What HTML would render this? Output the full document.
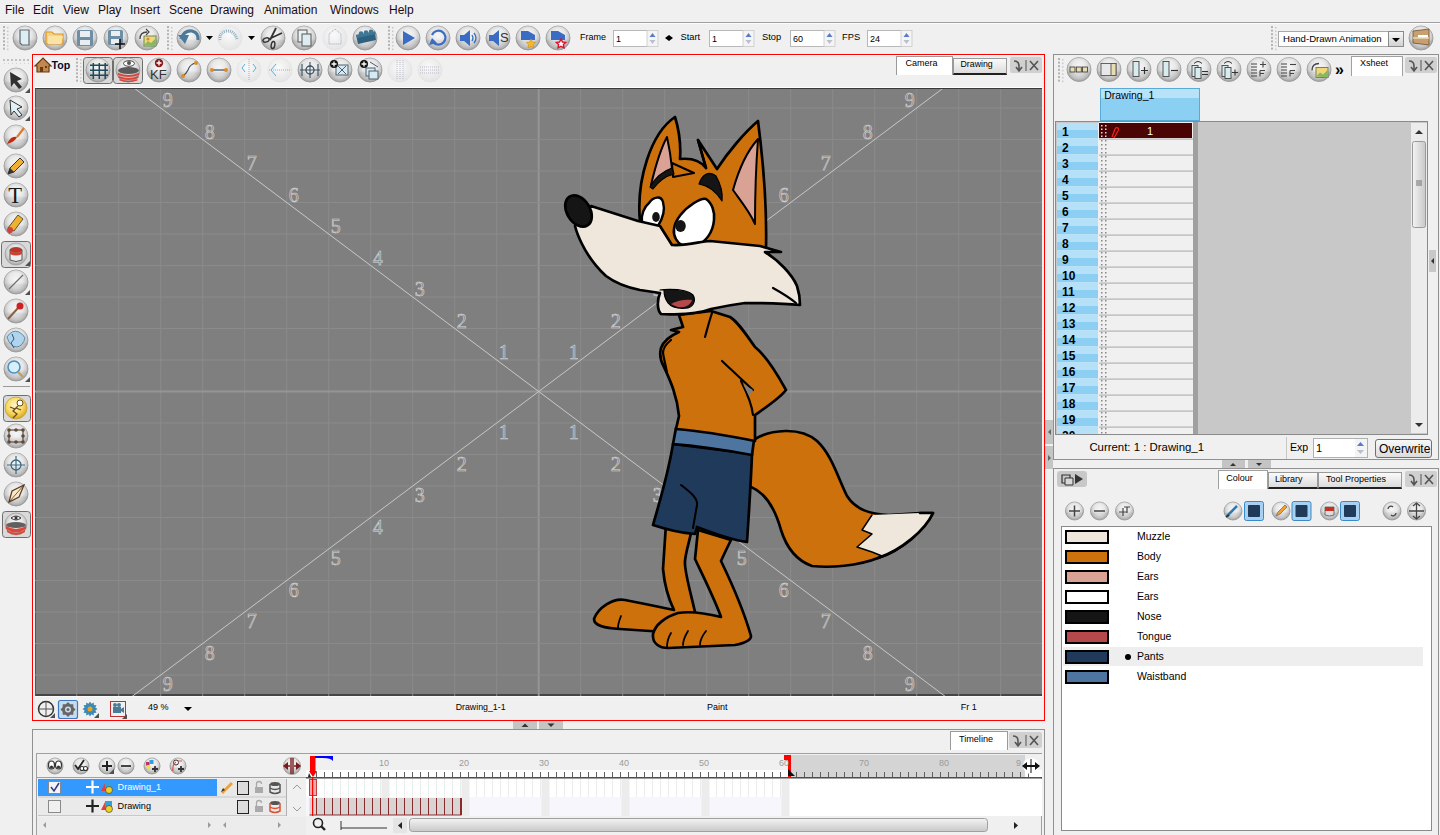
<!DOCTYPE html><html><head><meta charset="utf-8"><style>
*{box-sizing:border-box;margin:0;padding:0}
html,body{width:1440px;height:835px;overflow:hidden;background:#f0f0f0;font-family:"Liberation Sans",sans-serif;color:#000}
.a{position:absolute}
.mi{position:absolute;top:3px;font-size:12px;color:#1a0a14;line-height:normal}
.num{font-family:"Liberation Serif",serif;font-size:20px;line-height:14px;color:#888;-webkit-text-stroke:0.55px #d8d8d8}
svg{position:absolute;left:0;top:0}
</style></head><body><div class="mi" style="left:5px">File</div><div class="mi" style="left:33px">Edit</div><div class="mi" style="left:63px">View</div><div class="mi" style="left:98px">Play</div><div class="mi" style="left:130px">Insert</div><div class="mi" style="left:169px">Scene</div><div class="mi" style="left:210px">Drawing</div><div class="mi" style="left:264px">Animation</div><div class="mi" style="left:330px">Windows</div><div class="mi" style="left:389px">Help</div><div class="a" style="left:0;top:22px;width:1440px;height:1px;background:#a0a0a0"></div><div class="a" style="left:0;top:23px;width:1440px;height:1px;background:#fcfcfc"></div><div class="a" style="left:32px;top:54px;width:1013px;height:667px;border:1px solid #ff0000;background:#f0f0f0"></div><div class="a" style="left:33px;top:55px;width:1011px;height:665px;border:1px solid #ffffff;border-right:none;border-bottom:none"></div><div class="a" style="left:35px;top:87px;width:1007px;height:1px;background:#ffffff"></div><div class="a" style="left:35px;top:88px;width:1007px;height:608px;background:#7f7f7f;border-top:1px solid #3a3a3a;border-left:1px solid #555;border-bottom:2px solid #454545"></div><div class="a" style="left:32px;top:729px;width:1013px;height:106px;border:1px solid #909090;border-bottom:none;background:#f0f0f0"></div><div class="a" style="left:1053px;top:54px;width:386px;height:406px;border:1px solid #909090;background:#f0f0f0"></div><div class="a" style="left:1053px;top:468px;width:386px;height:367px;border:1px solid #909090;border-bottom:none;background:#f0f0f0"></div><svg width="1440" height="835" viewBox="0 0 1440 835"><defs>
<radialGradient id="gs" cx="0.5" cy="0.42" r="0.58"><stop offset="0" stop-color="#f6f6f6"/><stop offset="0.5" stop-color="#e6e6e6"/><stop offset="0.78" stop-color="#c8c8c8"/><stop offset="1" stop-color="#a0a0a0"/></radialGradient><linearGradient id="gs2" x1="0" y1="0" x2="0" y2="1"><stop offset="0" stop-color="#fff" stop-opacity="0.3"/><stop offset="0.5" stop-color="#fff" stop-opacity="0"/><stop offset="0.62" stop-color="#000" stop-opacity="0.07"/><stop offset="1" stop-color="#000" stop-opacity="0"/></linearGradient>
<radialGradient id="gd" cx="0.45" cy="0.38" r="0.62"><stop offset="0" stop-color="#fafafa"/><stop offset="1" stop-color="#e4e4e4"/></radialGradient>
<radialGradient id="gy" cx="0.45" cy="0.38" r="0.62"><stop offset="0" stop-color="#fff8d0"/><stop offset="0.6" stop-color="#f8d860"/><stop offset="1" stop-color="#d8a820"/></radialGradient>
<linearGradient id="gbtn" x1="0" y1="0" x2="0" y2="1"><stop offset="0" stop-color="#f8f8f8"/><stop offset="1" stop-color="#d0d0d0"/></linearGradient>
<linearGradient id="gscr" x1="0" y1="0" x2="0" y2="1"><stop offset="0" stop-color="#f4f4f4"/><stop offset="1" stop-color="#c8c8c8"/></linearGradient>
<linearGradient id="gscrv" x1="0" y1="0" x2="1" y2="0"><stop offset="0" stop-color="#f4f4f4"/><stop offset="1" stop-color="#c8c8c8"/></linearGradient>
<clipPath id="xs"><rect x="1055" y="122" width="44" height="312"/></clipPath><clipPath id="cv"><rect x="35" y="89" width="1007" height="607"/></clipPath>
</defs><g clip-path="url(#cv)"><rect x="76.2" y="89" width="1" height="607" fill="#8b8b8b"/><rect x="118.2" y="89" width="1" height="607" fill="#8b8b8b"/><rect x="160.2" y="89" width="1" height="607" fill="#8b8b8b"/><rect x="202.2" y="89" width="1" height="607" fill="#8b8b8b"/><rect x="244.2" y="89" width="1" height="607" fill="#8b8b8b"/><rect x="286.2" y="89" width="1" height="607" fill="#8b8b8b"/><rect x="328.2" y="89" width="1" height="607" fill="#8b8b8b"/><rect x="370.2" y="89" width="1" height="607" fill="#8b8b8b"/><rect x="412.2" y="89" width="1" height="607" fill="#8b8b8b"/><rect x="454.2" y="89" width="1" height="607" fill="#8b8b8b"/><rect x="496.2" y="89" width="1" height="607" fill="#8b8b8b"/><rect x="537.7" y="89" width="2" height="607" fill="#959595"/><rect x="580.2" y="89" width="1" height="607" fill="#8b8b8b"/><rect x="622.2" y="89" width="1" height="607" fill="#8b8b8b"/><rect x="664.2" y="89" width="1" height="607" fill="#8b8b8b"/><rect x="706.2" y="89" width="1" height="607" fill="#8b8b8b"/><rect x="748.2" y="89" width="1" height="607" fill="#8b8b8b"/><rect x="790.2" y="89" width="1" height="607" fill="#8b8b8b"/><rect x="832.2" y="89" width="1" height="607" fill="#8b8b8b"/><rect x="874.2" y="89" width="1" height="607" fill="#8b8b8b"/><rect x="916.2" y="89" width="1" height="607" fill="#8b8b8b"/><rect x="958.2" y="89" width="1" height="607" fill="#8b8b8b"/><rect x="1000.2" y="89" width="1" height="607" fill="#8b8b8b"/><rect x="35" y="107.5" width="1007" height="1" fill="#8b8b8b"/><rect x="35" y="139.0" width="1007" height="1" fill="#8b8b8b"/><rect x="35" y="170.5" width="1007" height="1" fill="#8b8b8b"/><rect x="35" y="202.0" width="1007" height="1" fill="#8b8b8b"/><rect x="35" y="233.5" width="1007" height="1" fill="#8b8b8b"/><rect x="35" y="265.0" width="1007" height="1" fill="#8b8b8b"/><rect x="35" y="296.5" width="1007" height="1" fill="#8b8b8b"/><rect x="35" y="328.0" width="1007" height="1" fill="#8b8b8b"/><rect x="35" y="359.5" width="1007" height="1" fill="#8b8b8b"/><rect x="35" y="390.5" width="1007" height="2" fill="#959595"/><rect x="35" y="422.5" width="1007" height="1" fill="#8b8b8b"/><rect x="35" y="454.0" width="1007" height="1" fill="#8b8b8b"/><rect x="35" y="485.5" width="1007" height="1" fill="#8b8b8b"/><rect x="35" y="517.0" width="1007" height="1" fill="#8b8b8b"/><rect x="35" y="548.5" width="1007" height="1" fill="#8b8b8b"/><rect x="35" y="580.0" width="1007" height="1" fill="#8b8b8b"/><rect x="35" y="611.5" width="1007" height="1" fill="#8b8b8b"/><rect x="35" y="643.0" width="1007" height="1" fill="#8b8b8b"/><rect x="35" y="674.5" width="1007" height="1" fill="#8b8b8b"/><line x1="-107.70000000000005" y1="-93.30000000000001" x2="1185.1000000000001" y2="876.3" stroke="#c8c8c8" stroke-width="1"/><line x1="-107.70000000000005" y1="876.3" x2="1185.1000000000001" y2="-93.30000000000001" stroke="#c8c8c8" stroke-width="1"/></g></svg><div class="a num" style="left:498.7px;top:345.2px">1</div><div class="a num" style="left:568.7px;top:345.2px">1</div><div class="a num" style="left:498.7px;top:425.4px">1</div><div class="a num" style="left:568.7px;top:425.4px">1</div><div class="a num" style="left:456.7px;top:313.8px">2</div><div class="a num" style="left:610.7px;top:313.8px">2</div><div class="a num" style="left:456.7px;top:456.9px">2</div><div class="a num" style="left:610.7px;top:456.9px">2</div><div class="a num" style="left:414.7px;top:282.2px">3</div><div class="a num" style="left:652.7px;top:282.2px">3</div><div class="a num" style="left:414.7px;top:488.4px">3</div><div class="a num" style="left:652.7px;top:488.4px">3</div><div class="a num" style="left:372.7px;top:250.8px">4</div><div class="a num" style="left:694.7px;top:250.8px">4</div><div class="a num" style="left:372.7px;top:519.9px">4</div><div class="a num" style="left:694.7px;top:519.9px">4</div><div class="a num" style="left:330.7px;top:219.2px">5</div><div class="a num" style="left:736.7px;top:219.2px">5</div><div class="a num" style="left:330.7px;top:551.4px">5</div><div class="a num" style="left:736.7px;top:551.4px">5</div><div class="a num" style="left:288.7px;top:187.8px">6</div><div class="a num" style="left:778.7px;top:187.8px">6</div><div class="a num" style="left:288.7px;top:582.9px">6</div><div class="a num" style="left:778.7px;top:582.9px">6</div><div class="a num" style="left:246.7px;top:156.2px">7</div><div class="a num" style="left:820.7px;top:156.2px">7</div><div class="a num" style="left:246.7px;top:614.4px">7</div><div class="a num" style="left:820.7px;top:614.4px">7</div><div class="a num" style="left:204.7px;top:124.8px">8</div><div class="a num" style="left:862.7px;top:124.8px">8</div><div class="a num" style="left:204.7px;top:645.9px">8</div><div class="a num" style="left:862.7px;top:645.9px">8</div><div class="a num" style="left:162.7px;top:93.2px">9</div><div class="a num" style="left:904.7px;top:93.2px">9</div><div class="a num" style="left:162.7px;top:677.4px">9</div><div class="a num" style="left:904.7px;top:677.4px">9</div><svg width="1440" height="835" viewBox="0 0 1440 835"><g clip-path="url(#cv)"><g stroke="#000" stroke-width="2.7" stroke-linejoin="round" stroke-linecap="round"><path d="M745,440 L755,439 C770,430 800,426 817,441 C832,455 838,478 847,496 C856,510 870,514 889,515 L920,513 L933,513 C925,530 902,550 878,558 C858,566 830,568 812,566 C795,560 786,546 781,530 C776,512 768,494 751,487 L745,487 Z" fill="#cd710d"/><path d="M872,515 L920,513 L933,513 C925,530 905,548 882,556 L872,552 L857,547 L872,534 L862,530 Z" fill="#efe7dc" stroke="none"/><path d="M872,515 L862,530 L872,534 L857,547 L872,552 L882,556" fill="none" stroke-width="1.5"/><path d="M920,513 L933,513 C925,530 902,550 878,558" fill="none"/><path d="M666,524 L663,569 C665,590 671,604 674,610 C660,607 640,603 625,600 C612,598 598,608 594,619 C594,626 605,628 620,629 L665,632 L700,630 L695,612 C690,590 684,570 685,561 C686,550 690,540 692,528 Z" fill="#cd710d"/><path d="M621,616 C619,621 618,625 618,628" fill="none" stroke-width="1.8"/><path d="M698,530 L695,559 C705,580 715,600 721,617 C705,613 690,611 678,613 C665,617 655,625 653,634 C652,644 660,648 668,648 L735,645 C745,643 751,640 751,636 C745,615 735,590 721,561 C725,552 728,546 731,540 Z" fill="#cd710d"/><path d="M671,633 C668,638 667,643 667,647 M688,631 C685,636 683,641 683,645 M706,631 C702,636 700,641 700,645" fill="none" stroke-width="1.8"/><path d="M673,444 C668,475 660,500 653,525 C668,530 682,533 695,534 L697,527 C715,534 732,540 747,542 C749,512 751,480 752,454 Z" fill="#1f3a5b"/><path d="M681,485 C690,492 698,498 697,505 L693,528" fill="none" stroke-width="2"/><path d="M676,428 C700,430 730,435 754,440 L752,455 C725,450 700,446 673,444 Z" fill="#4e75a0"/><path d="M679,315 L683,327 L671,330 L679,332 C672,335 664,340 661,348 C659,356 661,362 664,367 C670,380 677,395 679,416 L676,429 C700,431 730,436 755,441 L755,415 C765,408 780,398 786,390 C775,370 765,355 755,347 C745,333 738,322 730,317 L711,311 Z" fill="#cd710d"/><path d="M722,361 L753,390 M741,381 C748,395 752,405 753,415 M712,313 C709,322 707,330 705,337 M671,340 C666,344 663,348 663,353 C664,360 666,366 667,373" fill="none" stroke-width="2.2"/><path d="M743,384 L753,390 L749,396 Z" fill="#7f7f7f" stroke="none"/><path d="M640,222 C636,180 651,133 675,117 C679,130 681,145 680,159 C690,158 700,160 706,168 L698,140 L717,169 C728,152 745,132 758,121 C763,160 767,205 766,248 L703,243 L672,246 L637,222 Z" fill="#cd710d"/><path d="M698,140 L706,168" fill="none" stroke-width="2.5"/><path d="M667,137 C660,150 655,168 651,185 C658,180 665,174 672,169 C671,158 669,146 667,137 Z" fill="#daa294" stroke-width="2"/><path d="M758,139 C748,150 740,165 733,190 C740,200 750,212 755,224 C755,200 756,165 758,139 Z" fill="#daa294" stroke-width="2"/><path d="M672,163 L694,173 L673,177 Z" fill="#cd710d" stroke-width="2"/><path d="M650,187 C655,178 663,171 672,168 L674,174 C666,176 659,181 653,189 Z" fill="#151515" stroke-width="1.2"/><path d="M699,184 C702,175 709,170 716,176 C720,183 723,192 722,201 C717,193 710,186 699,184 Z" fill="#151515" stroke-width="1.2"/><path d="M649,203 C653,197 661,195 663,202 C665,209 663,218 658,226 C652,225 646,224 642,222 C641,215 644,207 649,203 Z" fill="#fff" stroke-width="2.4"/><ellipse cx="656" cy="217" rx="3.8" ry="5" fill="#151515" stroke="none"/><path d="M683,246 C677,243 673,236 674,229 C675,220 683,210 694,203 C699,200 703,198 706,199 C712,203 715,212 714,220 C713,232 706,242 697,245 C692,246 687,246 683,246 Z" fill="#fff" stroke-width="2.6"/><ellipse cx="680.5" cy="226" rx="5.3" ry="6" fill="#151515" stroke="none"/><path d="M591,206 L638,221 L660,226 L672,245 C690,246 700,241 710,241 L760,246 L781,252 L765,252 C778,260 792,274 797,286 C799,292 800,298 800,305 C780,303 760,303 745,303 C730,305 720,307 711,309 C705,311 700,312 699,312 C690,314 670,315 661,314 C657,310 657,300 660,293 L640,290 C625,287 614,282 606,276 C595,266 587,254 582,244 C578,236 576,230 575,226 Z" fill="#efe7dc"/><path d="M773,288 C782,293 790,298 796,303" fill="none" stroke-width="2.2"/><path d="M660,290 L664,289.5 C675,289 688,290 693,295 C696,300 694,306 688,308 C680,309 672,308 668,303 C665,299 664,295 664,290 Z" fill="#151515" stroke-width="1.2"/><path d="M671,304 C677,300 687,299 692,300 C690,306 684,308 678,307 C675,306 673,305 671,304 Z" fill="#b5484a" stroke="none"/><ellipse cx="578.5" cy="211" rx="11.5" ry="17" transform="rotate(-32 578.5 211)" fill="#151515"/></g></g></svg><div class="a" style="left:613px;top:30px;width:35px;height:17px;background:#fff;border:1px solid #b8b8b8;border-right-color:#e0e0e0"></div><div class="a" style="left:709px;top:30px;width:35px;height:17px;background:#fff;border:1px solid #b8b8b8;border-right-color:#e0e0e0"></div><div class="a" style="left:790px;top:30px;width:35px;height:17px;background:#fff;border:1px solid #b8b8b8;border-right-color:#e0e0e0"></div><div class="a" style="left:867px;top:30px;width:35px;height:17px;background:#fff;border:1px solid #b8b8b8;border-right-color:#e0e0e0"></div><div class="a" style="left:1278px;top:31px;width:126px;height:16px;background:#fff;border:1px solid #a8a8a8"></div><div class="a" style="left:896px;top:56px;width:57px;height:19px;background:#fff;border:1px solid #9a9a9a;border-bottom:none"></div><div class="a" style="left:953px;top:58px;width:54px;height:17px;background:linear-gradient(#fafafa,#dcdcdc);border:1px solid #9a9a9a;border-bottom:2px solid #202020"></div><div class="a" style="left:950px;top:731px;width:58px;height:19px;background:#fff;border:1px solid #9a9a9a;border-bottom:none"></div><div class="a" style="left:36px;top:753px;width:1006px;height:82px;border:1px solid #a0a0a0;border-bottom:none;background:#f0f0f0"></div><div class="a" style="left:38px;top:779px;width:179px;height:17px;background:#3399ff"></div><div class="a" style="left:217px;top:779px;width:69px;height:17px;background:#e8e8e8"></div><div class="a" style="left:38px;top:798px;width:248px;height:17px;background:#eaeaea"></div><div class="a" style="left:1351px;top:56px;width:52px;height:20px;background:#fff;border:1px solid #a0a0a0;border-bottom:none"></div><div class="a" style="left:1100px;top:88px;width:100px;height:33px;background:#8bd0f2;border:1px solid #5aaad8"></div><div class="a" style="left:1101px;top:89px;width:98px;height:9px;background:#b8e2f8"></div><div class="a" style="left:1313px;top:438px;width:55px;height:20px;background:#fff;border:1px solid #b0b0b0"></div><div class="a" style="left:1375px;top:439px;width:57px;height:19px;background:linear-gradient(#f8f8f8,#dcdcdc);border:1px solid #707070;border-radius:3px"></div><div class="a" style="left:1218px;top:470px;width:50px;height:19px;background:#fff;border:1px solid #a0a0a0;border-bottom:none"></div><div class="a" style="left:1268px;top:472px;width:50px;height:17px;background:linear-gradient(#fafafa,#dcdcdc);border:1px solid #9a9a9a;border-bottom:2px solid #202020"></div><div class="a" style="left:1318px;top:472px;width:84px;height:17px;background:linear-gradient(#fafafa,#dcdcdc);border:1px solid #9a9a9a;border-bottom:2px solid #202020"></div><div class="a" style="left:1061px;top:526px;width:371px;height:305px;background:#fff;border:1px solid #8a8a8a"></div><svg width="1440" height="835" viewBox="0 0 1440 835"><defs>
<radialGradient id="gs" cx="0.5" cy="0.42" r="0.58"><stop offset="0" stop-color="#f6f6f6"/><stop offset="0.5" stop-color="#e6e6e6"/><stop offset="0.78" stop-color="#c8c8c8"/><stop offset="1" stop-color="#a0a0a0"/></radialGradient><linearGradient id="gs2" x1="0" y1="0" x2="0" y2="1"><stop offset="0" stop-color="#fff" stop-opacity="0.3"/><stop offset="0.5" stop-color="#fff" stop-opacity="0"/><stop offset="0.62" stop-color="#000" stop-opacity="0.07"/><stop offset="1" stop-color="#000" stop-opacity="0"/></linearGradient>
<radialGradient id="gd" cx="0.45" cy="0.38" r="0.62"><stop offset="0" stop-color="#fafafa"/><stop offset="1" stop-color="#e4e4e4"/></radialGradient>
<radialGradient id="gy" cx="0.45" cy="0.38" r="0.62"><stop offset="0" stop-color="#fff8d0"/><stop offset="0.6" stop-color="#f8d860"/><stop offset="1" stop-color="#d8a820"/></radialGradient>
<linearGradient id="gbtn" x1="0" y1="0" x2="0" y2="1"><stop offset="0" stop-color="#f8f8f8"/><stop offset="1" stop-color="#d0d0d0"/></linearGradient>
<linearGradient id="gscr" x1="0" y1="0" x2="0" y2="1"><stop offset="0" stop-color="#f4f4f4"/><stop offset="1" stop-color="#c8c8c8"/></linearGradient>
<linearGradient id="gscrv" x1="0" y1="0" x2="1" y2="0"><stop offset="0" stop-color="#f4f4f4"/><stop offset="1" stop-color="#c8c8c8"/></linearGradient>
<clipPath id="xs"><rect x="1055" y="122" width="44" height="312"/></clipPath><clipPath id="cv2"><rect x="35" y="89" width="1007" height="607"/></clipPath>
</defs><rect x="3" y="26" width="2" height="2" fill="#b4b4b4"/><rect x="7" y="27" width="1.5" height="1.5" fill="#c8c8c8"/><rect x="3" y="29.6" width="2" height="2" fill="#b4b4b4"/><rect x="7" y="30.6" width="1.5" height="1.5" fill="#c8c8c8"/><rect x="3" y="33.2" width="2" height="2" fill="#b4b4b4"/><rect x="7" y="34.2" width="1.5" height="1.5" fill="#c8c8c8"/><rect x="3" y="36.800000000000004" width="2" height="2" fill="#b4b4b4"/><rect x="7" y="37.800000000000004" width="1.5" height="1.5" fill="#c8c8c8"/><rect x="3" y="40.400000000000006" width="2" height="2" fill="#b4b4b4"/><rect x="7" y="41.400000000000006" width="1.5" height="1.5" fill="#c8c8c8"/><rect x="3" y="44.00000000000001" width="2" height="2" fill="#b4b4b4"/><rect x="7" y="45.00000000000001" width="1.5" height="1.5" fill="#c8c8c8"/><rect x="3" y="47.60000000000001" width="2" height="2" fill="#b4b4b4"/><rect x="7" y="48.60000000000001" width="1.5" height="1.5" fill="#c8c8c8"/><circle cx="25" cy="38" r="12" fill="url(#gs)" stroke="#9c9c9c" stroke-width="0.9"/><circle cx="25" cy="38" r="12" fill="url(#gs2)"/><path d="M20 30 h9 v15 h-7 l-2 -2 z" fill="#dfeef2" stroke="#5a6a70" stroke-width="1.2"/><path d="M20 43 l2 2" stroke="#5a6a70" stroke-width="1"/><circle cx="55" cy="38" r="12" fill="url(#gs)" stroke="#9c9c9c" stroke-width="0.9"/><circle cx="55" cy="38" r="12" fill="url(#gs2)"/><path d="M46 32 h6 l2 2 h9 v10 h-17 z" fill="#f3d28a" stroke="#e2961c" stroke-width="1.2"/><path d="M48 36 h15 l-2 8 h-13 z" fill="#fbe3a6"/><circle cx="85" cy="38" r="12" fill="url(#gs)" stroke="#9c9c9c" stroke-width="0.9"/><circle cx="85" cy="38" r="12" fill="url(#gs2)"/><rect x="77" y="30" width="16" height="16" rx="1.5" fill="#6e8ea6"/><rect x="80" y="31" width="10" height="6" fill="#e8eef2"/><rect x="80" y="40" width="10" height="5" fill="#e8eef2"/><circle cx="116" cy="38" r="12" fill="url(#gs)" stroke="#9c9c9c" stroke-width="0.9"/><circle cx="116" cy="38" r="12" fill="url(#gs2)"/><rect x="108" y="30" width="15" height="15" rx="1.5" fill="#6e8ea6"/><rect x="111" y="31" width="9" height="5" fill="#e8eef2"/><rect x="111" y="39" width="9" height="5" fill="#e8eef2"/><path d="M120 39 v10 M115 44 h10" stroke="#111" stroke-width="1.6"/><circle cx="147" cy="38" r="12" fill="url(#gs)" stroke="#9c9c9c" stroke-width="0.9"/><circle cx="147" cy="38" r="12" fill="url(#gs2)"/><rect x="144" y="36" width="12" height="10" fill="#f2d77a" stroke="#6a8a50" stroke-width="1"/><path d="M144 45 l4 -4 l3 2 l5 -5 v8 z" fill="#8ab860"/><circle cx="148" cy="39" r="1.6" fill="#e08a30"/><path d="M140 39 q0 -7 7 -7" fill="none" stroke="#444" stroke-width="1.3"/><path d="M146 29 l3 3 l-3 3" fill="none" stroke="#444" stroke-width="1.2"/><rect x="167" y="26" width="2" height="2" fill="#b4b4b4"/><rect x="171" y="27" width="1.5" height="1.5" fill="#c8c8c8"/><rect x="167" y="29.6" width="2" height="2" fill="#b4b4b4"/><rect x="171" y="30.6" width="1.5" height="1.5" fill="#c8c8c8"/><rect x="167" y="33.2" width="2" height="2" fill="#b4b4b4"/><rect x="171" y="34.2" width="1.5" height="1.5" fill="#c8c8c8"/><rect x="167" y="36.800000000000004" width="2" height="2" fill="#b4b4b4"/><rect x="171" y="37.800000000000004" width="1.5" height="1.5" fill="#c8c8c8"/><rect x="167" y="40.400000000000006" width="2" height="2" fill="#b4b4b4"/><rect x="171" y="41.400000000000006" width="1.5" height="1.5" fill="#c8c8c8"/><rect x="167" y="44.00000000000001" width="2" height="2" fill="#b4b4b4"/><rect x="171" y="45.00000000000001" width="1.5" height="1.5" fill="#c8c8c8"/><rect x="167" y="47.60000000000001" width="2" height="2" fill="#b4b4b4"/><rect x="171" y="48.60000000000001" width="1.5" height="1.5" fill="#c8c8c8"/><circle cx="189" cy="38" r="12" fill="url(#gs)" stroke="#9c9c9c" stroke-width="0.9"/><circle cx="189" cy="38" r="12" fill="url(#gs2)"/><path d="M181 39 q3 -9 11 -8 q7 2 6 9" fill="none" stroke="#4b7a9a" stroke-width="3.2"/><path d="M178 35 l7 9 l4 -9 z" fill="#4b7a9a"/><path d="M206 36 h7 l-3.5 4 z" fill="#000"/><circle cx="230" cy="38" r="12" fill="url(#gd)" stroke="#dcdcdc" stroke-width="0.8" stroke-dasharray="1 1"/><path d="M237 39 q-3 -9 -11 -8 q-7 2 -6 9" fill="none" stroke="#8fb0c0" stroke-width="3" stroke-dasharray="1 1"/><path d="M248 36 h7 l-3.5 4 z" fill="#000"/><circle cx="273" cy="38" r="12" fill="url(#gs)" stroke="#9c9c9c" stroke-width="0.9"/><circle cx="273" cy="38" r="12" fill="url(#gs2)"/><path d="M270 40 L276 28 M269 39 L282 33" stroke="#333" stroke-width="1.8"/><ellipse cx="266" cy="40" rx="3.2" ry="2" transform="rotate(-20 266 40)" fill="none" stroke="#333" stroke-width="1.4"/><ellipse cx="273" cy="45" rx="1.8" ry="3.6" transform="rotate(10 273 45)" fill="none" stroke="#333" stroke-width="1.4"/><circle cx="304" cy="38" r="12" fill="url(#gs)" stroke="#9c9c9c" stroke-width="0.9"/><circle cx="304" cy="38" r="12" fill="url(#gs2)"/><rect x="298" y="30" width="9" height="12" fill="#e8f2f4" stroke="#555" stroke-width="1"/><rect x="302" y="34" width="9" height="12" fill="#dcecf0" stroke="#555" stroke-width="1"/><circle cx="335" cy="38" r="12" fill="url(#gd)" stroke="#dcdcdc" stroke-width="0.8" stroke-dasharray="1 1"/><path d="M329 34 l6 -5 l6 5 v10 h-12 z" fill="none" stroke="#9ab" stroke-width="1" stroke-dasharray="1 1"/><circle cx="365" cy="38" r="12" fill="url(#gs)" stroke="#9c9c9c" stroke-width="0.9"/><circle cx="365" cy="38" r="12" fill="url(#gs2)"/><path d="M356 35 L375 31.5 L376 40 L358 44 Z" fill="#2e6080"/><path d="M356 35 L375 31.5 L376 34 L357 38 Z" fill="#3f7896"/><circle cx="361" cy="33.5" r="2.3" fill="#3f7896"/><circle cx="366" cy="32.6" r="2.3" fill="#3f7896"/><circle cx="371" cy="31.7" r="2.3" fill="#3f7896"/><rect x="388" y="26" width="2" height="2" fill="#b4b4b4"/><rect x="392" y="27" width="1.5" height="1.5" fill="#c8c8c8"/><rect x="388" y="29.6" width="2" height="2" fill="#b4b4b4"/><rect x="392" y="30.6" width="1.5" height="1.5" fill="#c8c8c8"/><rect x="388" y="33.2" width="2" height="2" fill="#b4b4b4"/><rect x="392" y="34.2" width="1.5" height="1.5" fill="#c8c8c8"/><rect x="388" y="36.800000000000004" width="2" height="2" fill="#b4b4b4"/><rect x="392" y="37.800000000000004" width="1.5" height="1.5" fill="#c8c8c8"/><rect x="388" y="40.400000000000006" width="2" height="2" fill="#b4b4b4"/><rect x="392" y="41.400000000000006" width="1.5" height="1.5" fill="#c8c8c8"/><rect x="388" y="44.00000000000001" width="2" height="2" fill="#b4b4b4"/><rect x="392" y="45.00000000000001" width="1.5" height="1.5" fill="#c8c8c8"/><rect x="388" y="47.60000000000001" width="2" height="2" fill="#b4b4b4"/><rect x="392" y="48.60000000000001" width="1.5" height="1.5" fill="#c8c8c8"/><circle cx="408" cy="38" r="12" fill="url(#gs)" stroke="#9c9c9c" stroke-width="0.9"/><circle cx="408" cy="38" r="12" fill="url(#gs2)"/><path d="M403 31 L415 38 L403 45 Z" fill="#3a6cc4"/><circle cx="438" cy="38" r="12" fill="url(#gs)" stroke="#9c9c9c" stroke-width="0.9"/><circle cx="438" cy="38" r="12" fill="url(#gs2)"/><path d="M432 35 a7 7 0 1 1 1 7" fill="none" stroke="#3a6cc4" stroke-width="2.2"/><path d="M429 45 l3 -7 l5 5 z" fill="#3a6cc4"/><circle cx="468" cy="38" r="12" fill="url(#gs)" stroke="#9c9c9c" stroke-width="0.9"/><circle cx="468" cy="38" r="12" fill="url(#gs2)"/><path d="M460 35 h4 l6 -5 v16 l-6 -5 h-4 z" fill="#3a6cc4"/><path d="M472 35 q2 3 0 6 M474 33 q4 5 0 10" fill="none" stroke="#3a6cc4" stroke-width="1.3"/><circle cx="498" cy="38" r="12" fill="url(#gs)" stroke="#9c9c9c" stroke-width="0.9"/><circle cx="498" cy="38" r="12" fill="url(#gs2)"/><path d="M489 35 h4 l6 -5 v16 l-6 -5 h-4 z" fill="#3a6cc4"/><circle cx="528" cy="38" r="12" fill="url(#gs)" stroke="#9c9c9c" stroke-width="0.9"/><circle cx="528" cy="38" r="12" fill="url(#gs2)"/><path d="M521 31 h7 l7 4 v5 h-14 z" fill="#3a6cc4"/><path d="M531 39 l1.5 3 l3.2 0.4 l-2.3 2.2 l0.6 3.2 l-3 -1.5 l-3 1.5 l0.6 -3.2 l-2.3 -2.2 l3.2 -0.4 z" fill="#f4b92a" stroke="#d08a10" stroke-width="0.6"/><circle cx="558" cy="38" r="12" fill="url(#gs)" stroke="#9c9c9c" stroke-width="0.9"/><circle cx="558" cy="38" r="12" fill="url(#gs2)"/><path d="M551 31 h7 l7 4 v5 h-14 z" fill="#3a6cc4"/><path d="M561 39 l1.5 3 l3.2 0.4 l-2.3 2.2 l0.6 3.2 l-3 -1.5 l-3 1.5 l0.6 -3.2 l-2.3 -2.2 l3.2 -0.4 z" fill="#fff" stroke="#e0102a" stroke-width="1.4"/><rect x="647" y="30.5" width="11" height="16" fill="#f4f4f4" stroke="#c8c8c8" stroke-width="0.8"/><path d="M649.5 37 l3 -4 l3 4 z" fill="#5a7ac8"/><path d="M649.5 40 l3 4 l3 -4 z" fill="#b8c0d0"/><path d="M665 38 l4 -3 v6 z M673 38 l-4 -3 v6 z" fill="#000"/><rect x="743" y="30.5" width="11" height="16" fill="#f4f4f4" stroke="#c8c8c8" stroke-width="0.8"/><path d="M745.5 37 l3 -4 l3 4 z" fill="#5a7ac8"/><path d="M745.5 40 l3 4 l3 -4 z" fill="#b8c0d0"/><rect x="824" y="30.5" width="11" height="16" fill="#f4f4f4" stroke="#c8c8c8" stroke-width="0.8"/><path d="M826.5 37 l3 -4 l3 4 z" fill="#5a7ac8"/><path d="M826.5 40 l3 4 l3 -4 z" fill="#b8c0d0"/><rect x="901" y="30.5" width="11" height="16" fill="#f4f4f4" stroke="#c8c8c8" stroke-width="0.8"/><path d="M903.5 37 l3 -4 l3 4 z" fill="#5a7ac8"/><path d="M903.5 40 l3 4 l3 -4 z" fill="#b8c0d0"/><rect x="1271" y="26" width="2" height="2" fill="#b4b4b4"/><rect x="1275" y="27" width="1.5" height="1.5" fill="#c8c8c8"/><rect x="1271" y="29.6" width="2" height="2" fill="#b4b4b4"/><rect x="1275" y="30.6" width="1.5" height="1.5" fill="#c8c8c8"/><rect x="1271" y="33.2" width="2" height="2" fill="#b4b4b4"/><rect x="1275" y="34.2" width="1.5" height="1.5" fill="#c8c8c8"/><rect x="1271" y="36.800000000000004" width="2" height="2" fill="#b4b4b4"/><rect x="1275" y="37.800000000000004" width="1.5" height="1.5" fill="#c8c8c8"/><rect x="1271" y="40.400000000000006" width="2" height="2" fill="#b4b4b4"/><rect x="1275" y="41.400000000000006" width="1.5" height="1.5" fill="#c8c8c8"/><rect x="1271" y="44.00000000000001" width="2" height="2" fill="#b4b4b4"/><rect x="1275" y="45.00000000000001" width="1.5" height="1.5" fill="#c8c8c8"/><rect x="1271" y="47.60000000000001" width="2" height="2" fill="#b4b4b4"/><rect x="1275" y="48.60000000000001" width="1.5" height="1.5" fill="#c8c8c8"/><rect x="1388.5" y="31.5" width="15" height="15" fill="url(#gbtn)" stroke="#8a8a8a" stroke-width="1"/><path d="M1392 38 h8 l-4 4 z" fill="#000"/><circle cx="1421" cy="38" r="12" fill="url(#gs)" stroke="#9c9c9c" stroke-width="0.9"/><circle cx="1421" cy="38" r="12" fill="url(#gs2)"/><path d="M1413 31 l16 -2 v16 l-16 -2 z" fill="#c8a070" stroke="#6a5030" stroke-width="0.8"/><rect x="1418" y="35" width="10" height="3" fill="#fff"/><path d="M1413 38 h16" stroke="#e8d8b0" stroke-width="1.5"/><rect x="3" y="59" width="2" height="2" fill="#c0c0c0"/><rect x="4" y="63" width="1" height="1" fill="#d0d0d0"/><rect x="7" y="59" width="2" height="2" fill="#c0c0c0"/><rect x="8" y="63" width="1" height="1" fill="#d0d0d0"/><rect x="11" y="59" width="2" height="2" fill="#c0c0c0"/><rect x="12" y="63" width="1" height="1" fill="#d0d0d0"/><rect x="15" y="59" width="2" height="2" fill="#c0c0c0"/><rect x="16" y="63" width="1" height="1" fill="#d0d0d0"/><rect x="19" y="59" width="2" height="2" fill="#c0c0c0"/><rect x="20" y="63" width="1" height="1" fill="#d0d0d0"/><rect x="23" y="59" width="2" height="2" fill="#c0c0c0"/><rect x="24" y="63" width="1" height="1" fill="#d0d0d0"/><rect x="27" y="59" width="2" height="2" fill="#c0c0c0"/><rect x="28" y="63" width="1" height="1" fill="#d0d0d0"/><circle cx="16" cy="80" r="12" fill="url(#gs)" stroke="#9c9c9c" stroke-width="0.9"/><circle cx="16" cy="80" r="12" fill="url(#gs2)"/><path d="M10 72 L22 79 L17 81 L22 87 L19 89 L14 83 L11 87 Z" fill="#303030"/><path d="M30 93 L30 88 L25 93 Z" fill="#505050"/><circle cx="16" cy="108" r="12" fill="url(#gs)" stroke="#9c9c9c" stroke-width="0.9"/><circle cx="16" cy="108" r="12" fill="url(#gs2)"/><path d="M10 100 L22 107 L17 109 L22 115 L19 117 L14 111 L11 115 Z" fill="#dff0f6" stroke="#303030" stroke-width="1"/><path d="M30 121 L30 116 L25 121 Z" fill="#505050"/><circle cx="16" cy="137" r="12" fill="url(#gs)" stroke="#9c9c9c" stroke-width="0.9"/><circle cx="16" cy="137" r="12" fill="url(#gs2)"/><path d="M7 144 q4 -9 10 -7 q-2 5 -10 7 z" fill="#c02a10"/><path d="M17 137 L24 128" stroke="#e07a30" stroke-width="2.2"/><circle cx="16" cy="166" r="12" fill="url(#gs)" stroke="#9c9c9c" stroke-width="0.9"/><circle cx="16" cy="166" r="12" fill="url(#gs2)"/><path d="M8 174 l2 -6 l10 -10 l4 4 l-10 10 z" fill="#f0b030" stroke="#333" stroke-width="1"/><path d="M8 174 l2 -6 l4 4 z" fill="#333"/><circle cx="16" cy="195" r="12" fill="url(#gs)" stroke="#9c9c9c" stroke-width="0.9"/><circle cx="16" cy="195" r="12" fill="url(#gs2)"/><circle cx="16" cy="224" r="12" fill="url(#gs)" stroke="#9c9c9c" stroke-width="0.9"/><circle cx="16" cy="224" r="12" fill="url(#gs2)"/><path d="M8 228 l10 -13 l5 4 l-9 12 z" fill="#f0b030" stroke="#553" stroke-width="1"/><path d="M8 228 l4 4 l-3 2 z" fill="#d03030"/><circle cx="10" cy="230" r="3" fill="#d04040"/><rect x="1.5" y="241.5" width="29" height="26" rx="3" fill="#d9d9d9" stroke="#6e6e6e" stroke-width="1"/><circle cx="16" cy="254" r="11" fill="url(#gs)" stroke="#a0a0a0" stroke-width="0.8"/><path d="M10 250 h12 v10 q-6 3 -12 0 z" fill="#eee" stroke="#555" stroke-width="1"/><ellipse cx="16" cy="250" rx="6" ry="2.5" fill="#c83020" stroke="#555" stroke-width="0.8"/><path d="M10 254 q6 3 12 0 v-3 q-6 3 -12 0 z" fill="#d04030"/><path d="M30 266 L30 261 L25 266 Z" fill="#505050"/><circle cx="16" cy="282" r="12" fill="url(#gs)" stroke="#9c9c9c" stroke-width="0.9"/><circle cx="16" cy="282" r="12" fill="url(#gs2)"/><path d="M9 289 L23 275" stroke="#707070" stroke-width="1.2"/><path d="M30 295 L30 290 L25 295 Z" fill="#505050"/><circle cx="16" cy="311" r="12" fill="url(#gs)" stroke="#9c9c9c" stroke-width="0.9"/><circle cx="16" cy="311" r="12" fill="url(#gs2)"/><path d="M8 319 L18 308" stroke="#8a6040" stroke-width="2"/><circle cx="20" cy="306" r="3.5" fill="#d02020"/><circle cx="16" cy="340" r="12" fill="url(#gs)" stroke="#9c9c9c" stroke-width="0.9"/><circle cx="16" cy="340" r="12" fill="url(#gs2)"/><path d="M7 337 q5 -8 12 -5 q4 2 6 6 q-2 8 -8 9 q-7 0 -10 -10 z" fill="#b0d4ec" stroke="#5a8cb0" stroke-width="1"/><path d="M12 334 l2 5 l-3 4 l3 5" fill="none" stroke="#2a5a80" stroke-width="1"/><circle cx="16" cy="369" r="12" fill="url(#gs)" stroke="#9c9c9c" stroke-width="0.9"/><circle cx="16" cy="369" r="12" fill="url(#gs2)"/><circle cx="14" cy="367" r="6" fill="#d8eef8" stroke="#4a90c0" stroke-width="1.6"/><path d="M18 372 l5 5" stroke="#c0a060" stroke-width="2.4"/><path d="M30 382 L30 377 L25 382 Z" fill="#505050"/><rect x="3" y="386" width="27" height="1" fill="#9a9a9a"/><rect x="3.5" y="395.5" width="27" height="26" rx="3" fill="#d9d9d9" stroke="#6e6e6e" stroke-width="1"/><circle cx="16" cy="408" r="11" fill="url(#gy)" stroke="#c0a040" stroke-width="0.8"/><circle cx="20" cy="403" r="3" fill="#fff" stroke="#6a4a20" stroke-width="1"/><path d="M18 406 l-5 5 l4 3 l-4 4 M15 409 l-5 -2 M16 408 l5 2" fill="none" stroke="#6a4a20" stroke-width="1.3"/><circle cx="16" cy="436" r="12" fill="url(#gs)" stroke="#9c9c9c" stroke-width="0.9"/><circle cx="16" cy="436" r="12" fill="url(#gs2)"/><rect x="9" y="430" width="14" height="12" fill="none" stroke="#604a3a" stroke-width="1.2"/><circle cx="9" cy="430" r="1.8" fill="#604a3a"/><circle cx="16" cy="430" r="1.8" fill="#604a3a"/><circle cx="23" cy="430" r="1.8" fill="#604a3a"/><circle cx="9" cy="436" r="1.8" fill="#604a3a"/><circle cx="23" cy="436" r="1.8" fill="#604a3a"/><circle cx="9" cy="442" r="1.8" fill="#604a3a"/><circle cx="16" cy="442" r="1.8" fill="#604a3a"/><circle cx="23" cy="442" r="1.8" fill="#604a3a"/><circle cx="16" cy="465" r="12" fill="url(#gs)" stroke="#9c9c9c" stroke-width="0.9"/><circle cx="16" cy="465" r="12" fill="url(#gs2)"/><circle cx="16" cy="465" r="5" fill="none" stroke="#3a6a80" stroke-width="1.3"/><path d="M7 465 h18 M16 456 v18" stroke="#3a6a80" stroke-width="1.2"/><circle cx="16" cy="494" r="12" fill="url(#gs)" stroke="#9c9c9c" stroke-width="0.9"/><circle cx="16" cy="494" r="12" fill="url(#gs2)"/><path d="M9 502 L12 491 L24 485 L19 497 Z" fill="#f8e8c8" stroke="#5a3a20" stroke-width="1.2"/><path d="M9 502 L24 485" stroke="#5a3a20" stroke-width="0.8"/><rect x="2.5" y="511.5" width="28" height="26" rx="3" fill="#d9d9d9" stroke="#6e6e6e" stroke-width="1"/><circle cx="16" cy="524" r="11" fill="url(#gs)" stroke="#a0a0a0" stroke-width="0.8"/><ellipse cx="16" cy="525" rx="10" ry="3" fill="#606060"/><path d="M6 526 q10 6 20 0 v3 q-10 7 -20 0 z M7 530 q9 6 18 0 v2 q-9 6 -18 0 z" fill="#d8483a"/><path d="M11 518 q5 -4 10 0 q-5 4 -10 0 z" fill="none" stroke="#333" stroke-width="1"/><circle cx="16" cy="518" r="1.5" fill="#333"/><path d="M35 66 L43 58 L51 66 L49 66 L49 72 L37 72 L37 66 Z" fill="#c08850" stroke="#6a3a10" stroke-width="1.2"/><rect x="40" y="67" width="3" height="5" fill="#6a3a10"/><rect x="45" y="66" width="2" height="2" fill="#6a3a10"/><rect x="76" y="58" width="2" height="2" fill="#b4b4b4"/><rect x="80" y="59" width="1.5" height="1.5" fill="#c8c8c8"/><rect x="76" y="61.6" width="2" height="2" fill="#b4b4b4"/><rect x="80" y="62.6" width="1.5" height="1.5" fill="#c8c8c8"/><rect x="76" y="65.2" width="2" height="2" fill="#b4b4b4"/><rect x="80" y="66.2" width="1.5" height="1.5" fill="#c8c8c8"/><rect x="76" y="68.8" width="2" height="2" fill="#b4b4b4"/><rect x="80" y="69.8" width="1.5" height="1.5" fill="#c8c8c8"/><rect x="76" y="72.39999999999999" width="2" height="2" fill="#b4b4b4"/><rect x="80" y="73.39999999999999" width="1.5" height="1.5" fill="#c8c8c8"/><rect x="76" y="75.99999999999999" width="2" height="2" fill="#b4b4b4"/><rect x="80" y="76.99999999999999" width="1.5" height="1.5" fill="#c8c8c8"/><rect x="76" y="79.59999999999998" width="2" height="2" fill="#b4b4b4"/><rect x="80" y="80.59999999999998" width="1.5" height="1.5" fill="#c8c8c8"/><rect x="83.5" y="57.5" width="29" height="26" rx="3" fill="#d9d9d9" stroke="#6e6e6e" stroke-width="1"/><circle cx="98" cy="70" r="12" fill="url(#gs)" stroke="#9c9c9c" stroke-width="0.9"/><circle cx="98" cy="70" r="12" fill="url(#gs2)"/><path d="M93.3 63 v16 M99.3 63 v16 M105.2 63 v16 M90 65.2 h18 M90 70.3 h18 M90 75.3 h18" stroke="#1e4a5a" stroke-width="1.5"/><rect x="113.5" y="57.5" width="29" height="26" rx="3" fill="#d9d9d9" stroke="#6e6e6e" stroke-width="1"/><circle cx="128" cy="70" r="12" fill="url(#gs)" stroke="#9c9c9c" stroke-width="0.9"/><circle cx="128" cy="70" r="12" fill="url(#gs2)"/><ellipse cx="128.5" cy="70.5" rx="10.5" ry="3.5" fill="#5a5a5a"/><path d="M118 73 q10.5 4 21 0 v2 q-10.5 4 -21 0 z M118.5 76 q10 4 20 0 v2 q-10 4 -20 0 z M119.5 79 q9 3.5 18 0 v1.5 q-9 3.5 -18 0 z" fill="#d8483a"/><ellipse cx="129" cy="63.5" rx="5.5" ry="2.8" fill="#fff" stroke="#444" stroke-width="1"/><circle cx="129" cy="63" r="2" fill="#555"/><circle cx="159" cy="70" r="12" fill="url(#gs)" stroke="#9c9c9c" stroke-width="0.9"/><circle cx="159" cy="70" r="12" fill="url(#gs2)"/><circle cx="159" cy="63" r="4.2" fill="#8a1a1a"/><path d="M159 60.5 v5 M156.5 63 h5" stroke="#fff" stroke-width="1.4"/><circle cx="189" cy="70" r="12" fill="url(#gs)" stroke="#9c9c9c" stroke-width="0.9"/><circle cx="189" cy="70" r="12" fill="url(#gs2)"/><path d="M183 76 q3 -2 5 -6 q2 -6 8 -7" fill="none" stroke="#3a5060" stroke-width="1.2"/><circle cx="183" cy="76" r="2" fill="#e08a20"/><circle cx="196" cy="63" r="2" fill="#e08a20"/><circle cx="219" cy="70" r="12" fill="url(#gs)" stroke="#9c9c9c" stroke-width="0.9"/><circle cx="219" cy="70" r="12" fill="url(#gs2)"/><path d="M212 70 h14" stroke="#3a5060" stroke-width="1.2"/><circle cx="212" cy="70" r="2" fill="#e08a20"/><circle cx="226" cy="70" r="2" fill="#e08a20"/><circle cx="249" cy="70" r="12" fill="url(#gd)" stroke="#dcdcdc" stroke-width="0.8" stroke-dasharray="1 1"/><path d="M249 59 v22" stroke="#aaa" stroke-width="1" stroke-dasharray="1 1"/><path d="M245 64 l-3 4 l3 4 M253 64 l3 4 l-3 4" fill="none" stroke="#5ab0e0" stroke-width="1"/><circle cx="280" cy="70" r="12" fill="url(#gd)" stroke="#dcdcdc" stroke-width="0.8" stroke-dasharray="1 1"/><path d="M269 70 h22" stroke="#aaa" stroke-width="1" stroke-dasharray="1 1"/><path d="M276 64 l-5 6 l5 6" fill="none" stroke="#5ab0e0" stroke-width="1"/><circle cx="310" cy="70" r="12" fill="url(#gs)" stroke="#9c9c9c" stroke-width="0.9"/><circle cx="310" cy="70" r="12" fill="url(#gs2)"/><circle cx="310" cy="70" r="4" fill="none" stroke="#3a5060" stroke-width="1.3"/><path d="M300 70 h20 M310 62 v16 M302 64 v12 M318 64 v12" stroke="#3a5060" stroke-width="1.1"/><circle cx="340" cy="70" r="12" fill="url(#gs)" stroke="#9c9c9c" stroke-width="0.9"/><circle cx="340" cy="70" r="12" fill="url(#gs2)"/><rect x="336" y="65" width="12" height="10" fill="#d8eaf0" stroke="#4a6070" stroke-width="1"/><path d="M338 74 l8 -8 M338 66 l8 8" stroke="#4a6070" stroke-width="1"/><circle cx="334" cy="64" r="4" fill="#111"/><path d="M334 61.5 v5 M331.5 64 h5" stroke="#fff" stroke-width="1.3"/><circle cx="370" cy="70" r="12" fill="url(#gs)" stroke="#9c9c9c" stroke-width="0.9"/><circle cx="370" cy="70" r="12" fill="url(#gs2)"/><rect x="366" y="68" width="9" height="8" fill="#d8eaf0" stroke="#4a6070" stroke-width="1"/><rect x="369" y="71" width="9" height="8" fill="#d8eaf0" stroke="#4a6070" stroke-width="1"/><path d="M370 62 l8 5" stroke="#4a6070" stroke-width="1"/><circle cx="364" cy="64" r="4" fill="#111"/><path d="M364 61.5 v5 M361.5 64 h5" stroke="#fff" stroke-width="1.3"/><circle cx="400" cy="70" r="12" fill="url(#gd)" stroke="#dcdcdc" stroke-width="0.8" stroke-dasharray="1 1"/><path d="M397 60 v20 M400 60 v20 M403 60 v20" stroke="#aab" stroke-width="0.8" stroke-dasharray="1 1"/><circle cx="430" cy="70" r="12" fill="url(#gd)" stroke="#dcdcdc" stroke-width="0.8" stroke-dasharray="1 1"/><path d="M420 67 h20 M420 70 h20 M420 73 h20" stroke="#aab" stroke-width="0.8" stroke-dasharray="1 1"/><rect x="1010" y="57" width="32" height="16" rx="2" fill="#d0d0d0"/><path d="M1014 61 q5 0 5 5 v4 M1016 67 l3 4 l3 -4" fill="none" stroke="#555" stroke-width="1.6"/><path d="M1026 60 v11" stroke="#555" stroke-width="1"/><path d="M1030 61 l8 9 M1038 61 l-8 9" stroke="#555" stroke-width="1.6"/><rect x="35" y="696" width="1007" height="1" fill="#fafafa"/><circle cx="46" cy="709" r="7.5" fill="none" stroke="#333" stroke-width="1.5"/><path d="M38.5 709 h15 M46 701.5 v15" stroke="#555" stroke-width="1"/><path d="M55 718 L55 713 L50 718 Z" fill="#505050"/><rect x="58.5" y="700.5" width="19" height="18" rx="2" fill="#c8dcf0" stroke="#3a7ac0" stroke-width="1.2"/><polygon points="75.50,709.50 73.36,711.72 73.30,714.80 70.22,714.86 68.00,717.00 65.78,714.86 62.70,714.80 62.64,711.72 60.50,709.50 62.64,707.28 62.70,704.20 65.78,704.14 68.00,702.00 70.22,704.14 73.30,704.20 73.36,707.28" fill="#666"/><circle cx="68" cy="709.5" r="3" fill="#c8dcf0"/><circle cx="68" cy="709.5" r="1.5" fill="#666"/><polygon points="97.50,709.00 95.31,710.42 96.50,712.75 93.89,712.89 93.75,715.50 91.42,714.31 90.00,716.50 88.58,714.31 86.25,715.50 86.11,712.89 83.50,712.75 84.69,710.42 82.50,709.00 84.69,707.58 83.50,705.25 86.11,705.11 86.25,702.50 88.58,703.69 90.00,701.50 91.42,703.69 93.75,702.50 93.89,705.11 96.50,705.25 95.31,707.58" fill="#3a8ab8"/><circle cx="90" cy="709" r="2.5" fill="#f0a020"/><path d="M99 718 L99 713 L94 718 Z" fill="#505050"/><rect x="110.5" y="701.5" width="15" height="15" fill="none" stroke="#c03030" stroke-width="1"/><path d="M113 707 h8 v6 h-8 z M121 709 l3 -2 v6 l-3 -2" fill="#4a7a9a"/><circle cx="115" cy="705" r="2" fill="#4a7a9a"/><circle cx="119" cy="705" r="2" fill="#4a7a9a"/><path d="M127 719 L127 714 L122 719 Z" fill="#505050"/><path d="M184 707 h8 l-4 4 z" fill="#000"/><rect x="513" y="721" width="24" height="8" fill="#c4c4c4"/><path d="M521.5 727 l3.5 -3.5 l3.5 3.5 z" fill="#333"/><rect x="539" y="721" width="24" height="8" fill="#c4c4c4"/><path d="M547.5 723.5 l3.5 3.5 l3.5 -3.5 z" fill="#333"/><rect x="1009" y="732" width="33" height="16" rx="2" fill="#d0d0d0"/><path d="M1013 736 q5 0 5 5 v4 M1015 742 l3 4 l3 -4" fill="none" stroke="#555" stroke-width="1.6"/><path d="M1026 735 v11" stroke="#555" stroke-width="1"/><path d="M1030 736 l8 9 M1038 736 l-8 9" stroke="#555" stroke-width="1.6"/><circle cx="55" cy="766" r="8" fill="url(#gs)" stroke="#9c9c9c" stroke-width="0.9"/><circle cx="55" cy="766" r="8" fill="url(#gs2)"/><circle cx="81" cy="766" r="8" fill="url(#gs)" stroke="#9c9c9c" stroke-width="0.9"/><circle cx="81" cy="766" r="8" fill="url(#gs2)"/><ellipse cx="51.5" cy="765" rx="3" ry="4" fill="#fff" stroke="#333" stroke-width="1.2"/><ellipse cx="58.5" cy="765" rx="3" ry="4" fill="#fff" stroke="#333" stroke-width="1.2"/><circle cx="51.5" cy="767" r="1.6" fill="#333"/><circle cx="58.5" cy="767" r="1.6" fill="#333"/><path d="M75 765 l3 4 l6 -9" fill="none" stroke="#222" stroke-width="1.8"/><circle cx="82" cy="768.5" r="2" fill="#fff" stroke="#333" stroke-width="1.1"/><circle cx="85.5" cy="768.5" r="2" fill="#fff" stroke="#333" stroke-width="1.1"/><circle cx="107" cy="766" r="8" fill="url(#gs)" stroke="#9c9c9c" stroke-width="0.9"/><circle cx="107" cy="766" r="8" fill="url(#gs2)"/><path d="M102 766 h10 M107 761 v10" stroke="#222" stroke-width="2"/><path d="M114 774 L114 769 L109 774 Z" fill="#505050"/><circle cx="126" cy="766" r="8" fill="url(#gs)" stroke="#9c9c9c" stroke-width="0.9"/><circle cx="126" cy="766" r="8" fill="url(#gs2)"/><path d="M121 766 h10" stroke="#444" stroke-width="2"/><circle cx="152" cy="766" r="8" fill="url(#gs)" stroke="#9c9c9c" stroke-width="0.9"/><circle cx="152" cy="766" r="8" fill="url(#gs2)"/><rect x="146" y="762" width="3.5" height="3.5" fill="#c03060"/><rect x="149.5" y="760" width="4" height="4" fill="#30a0e0"/><circle cx="148.5" cy="767" r="2" fill="#f0e040"/><path d="M152 769 h6 M155 766 v6" stroke="#333" stroke-width="1.8"/><circle cx="178" cy="766" r="8" fill="url(#gs)" stroke="#9c9c9c" stroke-width="0.9"/><circle cx="178" cy="766" r="8" fill="url(#gs2)"/><circle cx="176" cy="762.5" r="2.5" fill="#fff" stroke="#333" stroke-width="1"/><path d="M173 771 q-1 -6 3 -9 M178 761 h4" fill="none" stroke="#e05040" stroke-width="1.2"/><path d="M178 769 h6 M181 766 v6" stroke="#333" stroke-width="1.8"/><circle cx="292" cy="766" r="8.5" fill="url(#gs)" stroke="#9c9c9c" stroke-width="0.9"/><circle cx="292" cy="766" r="8.5" fill="url(#gs2)"/><path d="M291 758 v16 M293 758 v16" stroke="#7a1a1a" stroke-width="1.4"/><path d="M283 766 l5 -4 v8 z M301 766 l-5 -4 v8 z" fill="#7a1a1a"/><path d="M286 766 h4 M294 766 h4" stroke="#7a1a1a" stroke-width="1.4"/><rect x="37" y="777" width="269" height="1" fill="#a0a0a0"/><rect x="38" y="796" width="248" height="2" fill="#d8d8d8"/><rect x="38" y="815" width="248" height="1" fill="#c8c8c8"/><rect x="286" y="779" width="1" height="37" fill="#b0b0b0"/><rect x="48.5" y="781.5" width="12" height="12" fill="#f4f4f4" stroke="#8a8a8a" stroke-width="1"/><path d="M51 787 l3 4 l5 -8" fill="none" stroke="#2a3a8a" stroke-width="1.5"/><rect x="48.5" y="800.5" width="12" height="12" fill="#f0f0f0" stroke="#8a8a8a" stroke-width="1"/><path d="M86 787 h13 M92.5 780.5 v13" stroke="#fff" stroke-width="2.2"/><path d="M86 806 h13 M92.5 799.5 v13" stroke="#222" stroke-width="2.2"/><path d="M101 791 l4 -8 l4 8 z" fill="#e04040"/><rect x="105" y="782" width="7" height="7" fill="#30a0e0"/><circle cx="109" cy="790" r="3.5" fill="#f0d020" stroke="#333" stroke-width="0.6"/><path d="M101 810 l4 -8 l4 8 z" fill="#e04040"/><rect x="105" y="801" width="7" height="7" fill="#30a0e0"/><circle cx="109" cy="809" r="3.5" fill="#f0d020" stroke="#333" stroke-width="0.6"/><path d="M221 792 l10 -10 l2 2 l-10 10 z" fill="#f0a030"/><path d="M221 792 l2 -4 l2 2 z" fill="#333"/><rect x="237.5" y="781.5" width="11" height="13" fill="#dcdcdc" stroke="#222" stroke-width="1"/><rect x="255" y="787" width="8" height="6" fill="#aaa"/><path d="M256.5 787 v-3 a2.5 2.5 0 0 1 5 0" fill="none" stroke="#aaa" stroke-width="1.3"/><rect x="237.5" y="800.5" width="11" height="13" fill="#dcdcdc" stroke="#222" stroke-width="1"/><rect x="255" y="806" width="8" height="6" fill="#aaa"/><path d="M256.5 806 v-3 a2.5 2.5 0 0 1 5 0" fill="none" stroke="#aaa" stroke-width="1.3"/><ellipse cx="275" cy="784" rx="5" ry="2" fill="#555"/><path d="M270 784 v8 q5 3 10 0 v-8" fill="none" stroke="#555" stroke-width="1.5"/><path d="M270 788 q5 3 10 0" fill="none" stroke="#555" stroke-width="1.3"/><ellipse cx="275" cy="803" rx="5" ry="2" fill="#555"/><path d="M270 803 v8 q5 3 10 0 v-8" fill="none" stroke="#e05030" stroke-width="1.5"/><path d="M270 807 q5 3 10 0" fill="none" stroke="#e05030" stroke-width="1.3"/><path d="M293 789 l4 -4 l4 4" fill="none" stroke="#9a9a9a" stroke-width="1"/><path d="M293 807 l4 4 l4 -4" fill="none" stroke="#9a9a9a" stroke-width="1"/><rect x="37" y="817" width="269" height="18" fill="#ececec"/><path d="M46 822 v6 l-3 -3 z M208 822 v6 l3 -3 z M226 822 v6 l-3 -3 z M278 822 v6 l3 -3 z" fill="#9a9a9a"/><rect x="306" y="754" width="736" height="16" fill="#f0f0f0"/><rect x="306" y="770" width="736" height="7" fill="#fff"/><rect x="789" y="755" width="236" height="22" fill="#d4d4d4"/><rect x="306" y="777" width="736" height="1.5" fill="#505050"/><rect x="316" y="772" width="1" height="5" fill="#606060"/><rect x="324" y="772" width="1" height="5" fill="#606060"/><rect x="332" y="772" width="1" height="5" fill="#606060"/><rect x="340" y="772" width="1" height="5" fill="#606060"/><rect x="348" y="772" width="1" height="5" fill="#606060"/><rect x="356" y="772" width="1" height="5" fill="#606060"/><rect x="364" y="772" width="1" height="5" fill="#606060"/><rect x="372" y="772" width="1" height="5" fill="#606060"/><rect x="380" y="772" width="1" height="5" fill="#606060"/><rect x="388" y="772" width="1" height="5" fill="#606060"/><rect x="396" y="772" width="1" height="5" fill="#606060"/><rect x="404" y="772" width="1" height="5" fill="#606060"/><rect x="412" y="772" width="1" height="5" fill="#606060"/><rect x="420" y="772" width="1" height="5" fill="#606060"/><rect x="428" y="772" width="1" height="5" fill="#606060"/><rect x="436" y="772" width="1" height="5" fill="#606060"/><rect x="444" y="772" width="1" height="5" fill="#606060"/><rect x="452" y="772" width="1" height="5" fill="#606060"/><rect x="460" y="772" width="1" height="5" fill="#606060"/><rect x="468" y="772" width="1" height="5" fill="#606060"/><rect x="476" y="772" width="1" height="5" fill="#606060"/><rect x="484" y="772" width="1" height="5" fill="#606060"/><rect x="492" y="772" width="1" height="5" fill="#606060"/><rect x="500" y="772" width="1" height="5" fill="#606060"/><rect x="508" y="772" width="1" height="5" fill="#606060"/><rect x="516" y="772" width="1" height="5" fill="#606060"/><rect x="524" y="772" width="1" height="5" fill="#606060"/><rect x="532" y="772" width="1" height="5" fill="#606060"/><rect x="540" y="772" width="1" height="5" fill="#606060"/><rect x="548" y="772" width="1" height="5" fill="#606060"/><rect x="556" y="772" width="1" height="5" fill="#606060"/><rect x="564" y="772" width="1" height="5" fill="#606060"/><rect x="572" y="772" width="1" height="5" fill="#606060"/><rect x="580" y="772" width="1" height="5" fill="#606060"/><rect x="588" y="772" width="1" height="5" fill="#606060"/><rect x="596" y="772" width="1" height="5" fill="#606060"/><rect x="604" y="772" width="1" height="5" fill="#606060"/><rect x="612" y="772" width="1" height="5" fill="#606060"/><rect x="620" y="772" width="1" height="5" fill="#606060"/><rect x="628" y="772" width="1" height="5" fill="#606060"/><rect x="636" y="772" width="1" height="5" fill="#606060"/><rect x="644" y="772" width="1" height="5" fill="#606060"/><rect x="652" y="772" width="1" height="5" fill="#606060"/><rect x="660" y="772" width="1" height="5" fill="#606060"/><rect x="668" y="772" width="1" height="5" fill="#606060"/><rect x="676" y="772" width="1" height="5" fill="#606060"/><rect x="684" y="772" width="1" height="5" fill="#606060"/><rect x="692" y="772" width="1" height="5" fill="#606060"/><rect x="700" y="772" width="1" height="5" fill="#606060"/><rect x="708" y="772" width="1" height="5" fill="#606060"/><rect x="716" y="772" width="1" height="5" fill="#606060"/><rect x="724" y="772" width="1" height="5" fill="#606060"/><rect x="732" y="772" width="1" height="5" fill="#606060"/><rect x="740" y="772" width="1" height="5" fill="#606060"/><rect x="748" y="772" width="1" height="5" fill="#606060"/><rect x="756" y="772" width="1" height="5" fill="#606060"/><rect x="764" y="772" width="1" height="5" fill="#606060"/><rect x="772" y="772" width="1" height="5" fill="#606060"/><rect x="780" y="772" width="1" height="5" fill="#606060"/><rect x="788" y="772" width="1" height="5" fill="#606060"/><rect x="796" y="772" width="1" height="5" fill="#606060"/><rect x="804" y="772" width="1" height="5" fill="#606060"/><rect x="812" y="772" width="1" height="5" fill="#606060"/><rect x="820" y="772" width="1" height="5" fill="#606060"/><rect x="828" y="772" width="1" height="5" fill="#606060"/><rect x="836" y="772" width="1" height="5" fill="#606060"/><rect x="844" y="772" width="1" height="5" fill="#606060"/><rect x="852" y="772" width="1" height="5" fill="#606060"/><rect x="860" y="772" width="1" height="5" fill="#606060"/><rect x="868" y="772" width="1" height="5" fill="#606060"/><rect x="876" y="772" width="1" height="5" fill="#606060"/><rect x="884" y="772" width="1" height="5" fill="#606060"/><rect x="892" y="772" width="1" height="5" fill="#606060"/><rect x="900" y="772" width="1" height="5" fill="#606060"/><rect x="908" y="772" width="1" height="5" fill="#606060"/><rect x="916" y="772" width="1" height="5" fill="#606060"/><rect x="924" y="772" width="1" height="5" fill="#606060"/><rect x="932" y="772" width="1" height="5" fill="#606060"/><rect x="940" y="772" width="1" height="5" fill="#606060"/><rect x="948" y="772" width="1" height="5" fill="#606060"/><rect x="956" y="772" width="1" height="5" fill="#606060"/><rect x="964" y="772" width="1" height="5" fill="#606060"/><rect x="972" y="772" width="1" height="5" fill="#606060"/><rect x="980" y="772" width="1" height="5" fill="#606060"/><rect x="988" y="772" width="1" height="5" fill="#606060"/><rect x="996" y="772" width="1" height="5" fill="#606060"/><rect x="1004" y="772" width="1" height="5" fill="#606060"/><rect x="1012" y="772" width="1" height="5" fill="#606060"/><rect x="1020" y="772" width="1" height="5" fill="#606060"/><rect x="1028" y="772" width="1" height="5" fill="#606060"/><rect x="306" y="779" width="736" height="37" fill="#fff"/><rect x="306" y="797" width="483" height="19" fill="#f6f6fc"/><rect x="316" y="779" width="1" height="18" fill="#ececec"/><rect x="324" y="779" width="1" height="18" fill="#ececec"/><rect x="332" y="779" width="1" height="18" fill="#ececec"/><rect x="340" y="779" width="1" height="18" fill="#ececec"/><rect x="348" y="779" width="1" height="18" fill="#ececec"/><rect x="356" y="779" width="1" height="18" fill="#ececec"/><rect x="364" y="779" width="1" height="18" fill="#ececec"/><rect x="372" y="779" width="1" height="18" fill="#ececec"/><rect x="380" y="779" width="1" height="18" fill="#ececec"/><rect x="381.5" y="779" width="8" height="37" fill="#ececec"/><rect x="388" y="779" width="1" height="18" fill="#ececec"/><rect x="396" y="779" width="1" height="18" fill="#ececec"/><rect x="404" y="779" width="1" height="18" fill="#ececec"/><rect x="412" y="779" width="1" height="18" fill="#ececec"/><rect x="420" y="779" width="1" height="18" fill="#ececec"/><rect x="428" y="779" width="1" height="18" fill="#ececec"/><rect x="436" y="779" width="1" height="18" fill="#ececec"/><rect x="444" y="779" width="1" height="18" fill="#ececec"/><rect x="452" y="779" width="1" height="18" fill="#ececec"/><rect x="460" y="779" width="1" height="18" fill="#ececec"/><rect x="461.5" y="779" width="8" height="37" fill="#ececec"/><rect x="468" y="779" width="1" height="18" fill="#ececec"/><rect x="476" y="779" width="1" height="18" fill="#ececec"/><rect x="484" y="779" width="1" height="18" fill="#ececec"/><rect x="492" y="779" width="1" height="18" fill="#ececec"/><rect x="500" y="779" width="1" height="18" fill="#ececec"/><rect x="508" y="779" width="1" height="18" fill="#ececec"/><rect x="516" y="779" width="1" height="18" fill="#ececec"/><rect x="524" y="779" width="1" height="18" fill="#ececec"/><rect x="532" y="779" width="1" height="18" fill="#ececec"/><rect x="540" y="779" width="1" height="18" fill="#ececec"/><rect x="541.5" y="779" width="8" height="37" fill="#ececec"/><rect x="548" y="779" width="1" height="18" fill="#ececec"/><rect x="556" y="779" width="1" height="18" fill="#ececec"/><rect x="564" y="779" width="1" height="18" fill="#ececec"/><rect x="572" y="779" width="1" height="18" fill="#ececec"/><rect x="580" y="779" width="1" height="18" fill="#ececec"/><rect x="588" y="779" width="1" height="18" fill="#ececec"/><rect x="596" y="779" width="1" height="18" fill="#ececec"/><rect x="604" y="779" width="1" height="18" fill="#ececec"/><rect x="612" y="779" width="1" height="18" fill="#ececec"/><rect x="620" y="779" width="1" height="18" fill="#ececec"/><rect x="621.5" y="779" width="8" height="37" fill="#ececec"/><rect x="628" y="779" width="1" height="18" fill="#ececec"/><rect x="636" y="779" width="1" height="18" fill="#ececec"/><rect x="644" y="779" width="1" height="18" fill="#ececec"/><rect x="652" y="779" width="1" height="18" fill="#ececec"/><rect x="660" y="779" width="1" height="18" fill="#ececec"/><rect x="668" y="779" width="1" height="18" fill="#ececec"/><rect x="676" y="779" width="1" height="18" fill="#ececec"/><rect x="684" y="779" width="1" height="18" fill="#ececec"/><rect x="692" y="779" width="1" height="18" fill="#ececec"/><rect x="700" y="779" width="1" height="18" fill="#ececec"/><rect x="701.5" y="779" width="8" height="37" fill="#ececec"/><rect x="708" y="779" width="1" height="18" fill="#ececec"/><rect x="716" y="779" width="1" height="18" fill="#ececec"/><rect x="724" y="779" width="1" height="18" fill="#ececec"/><rect x="732" y="779" width="1" height="18" fill="#ececec"/><rect x="740" y="779" width="1" height="18" fill="#ececec"/><rect x="748" y="779" width="1" height="18" fill="#ececec"/><rect x="756" y="779" width="1" height="18" fill="#ececec"/><rect x="764" y="779" width="1" height="18" fill="#ececec"/><rect x="772" y="779" width="1" height="18" fill="#ececec"/><rect x="780" y="779" width="1" height="18" fill="#ececec"/><rect x="781.5" y="779" width="8" height="37" fill="#ececec"/><rect x="788" y="779" width="1" height="18" fill="#ececec"/><rect x="309.5" y="798" width="152" height="17" fill="#d8d4d4"/><rect x="316" y="798" width="1" height="17" fill="#8a2a2a"/><rect x="324" y="798" width="1" height="17" fill="#8a2a2a"/><rect x="332" y="798" width="1" height="17" fill="#8a2a2a"/><rect x="340" y="798" width="1" height="17" fill="#8a2a2a"/><rect x="348" y="798" width="1" height="17" fill="#8a2a2a"/><rect x="356" y="798" width="1" height="17" fill="#8a2a2a"/><rect x="364" y="798" width="1" height="17" fill="#8a2a2a"/><rect x="372" y="798" width="1" height="17" fill="#8a2a2a"/><rect x="380" y="798" width="1" height="17" fill="#8a2a2a"/><rect x="388" y="798" width="1" height="17" fill="#8a2a2a"/><rect x="396" y="798" width="1" height="17" fill="#8a2a2a"/><rect x="404" y="798" width="1" height="17" fill="#8a2a2a"/><rect x="412" y="798" width="1" height="17" fill="#8a2a2a"/><rect x="420" y="798" width="1" height="17" fill="#8a2a2a"/><rect x="428" y="798" width="1" height="17" fill="#8a2a2a"/><rect x="436" y="798" width="1" height="17" fill="#8a2a2a"/><rect x="444" y="798" width="1" height="17" fill="#8a2a2a"/><rect x="452" y="798" width="1" height="17" fill="#8a2a2a"/><rect x="460" y="798" width="1" height="17" fill="#8a2a2a"/><rect x="309.5" y="814.5" width="152" height="1" fill="#8a2a2a"/><rect x="461" y="798" width="1" height="17" fill="#8a2a2a"/><rect x="309.5" y="779.5" width="7" height="16" fill="#f0a8a8" stroke="#c04040" stroke-width="1"/><rect x="310" y="756" width="5.5" height="16" fill="#ff0000"/><path d="M309 771 h8 l-4 6 z" fill="#ff0000"/><path d="M309 773 l-1 4 h3 z" fill="#222"/><rect x="312" y="777" width="1.2" height="39" fill="#ff0000"/><path d="M315 756 h18 v5 q-2 -3 -10 -3 h-8 z" fill="#0000ff"/><rect x="788" y="755" width="3" height="22" fill="#ff0000"/><path d="M784 755 h4 v5 h-4 z" fill="#ff0000"/><path d="M788 769 l7 7 h-7 z" fill="#111"/><circle cx="1031" cy="766" r="8" fill="#fff"/><path d="M1023 766 h16" stroke="#111" stroke-width="2"/><path d="M1022 766 l5 -4 v8 z M1040 766 l-5 -4 v8 z" fill="#111"/><path d="M1031 759 v14" stroke="#111" stroke-width="1"/><circle cx="318" cy="823" r="4.5" fill="none" stroke="#222" stroke-width="1.6"/><path d="M321 826 l4 4" stroke="#222" stroke-width="2.4"/><path d="M341 821 v9 M341 828 h46" stroke="#333" stroke-width="1"/><rect x="393" y="818" width="14" height="15" fill="#e4e4e4"/><path d="M402 822 v7 l-4 -3.5 z" fill="#222"/><rect x="409.5" y="818.5" width="578" height="13" rx="3" fill="url(#gscr)" stroke="#a0a0a0" stroke-width="1"/><path d="M1014 822 v7 l4 -3.5 z" fill="#222"/><rect x="1058" y="58" width="2" height="2" fill="#b4b4b4"/><rect x="1062" y="59" width="1.5" height="1.5" fill="#c8c8c8"/><rect x="1058" y="61.6" width="2" height="2" fill="#b4b4b4"/><rect x="1062" y="62.6" width="1.5" height="1.5" fill="#c8c8c8"/><rect x="1058" y="65.2" width="2" height="2" fill="#b4b4b4"/><rect x="1062" y="66.2" width="1.5" height="1.5" fill="#c8c8c8"/><rect x="1058" y="68.8" width="2" height="2" fill="#b4b4b4"/><rect x="1062" y="69.8" width="1.5" height="1.5" fill="#c8c8c8"/><rect x="1058" y="72.39999999999999" width="2" height="2" fill="#b4b4b4"/><rect x="1062" y="73.39999999999999" width="1.5" height="1.5" fill="#c8c8c8"/><rect x="1058" y="75.99999999999999" width="2" height="2" fill="#b4b4b4"/><rect x="1062" y="76.99999999999999" width="1.5" height="1.5" fill="#c8c8c8"/><rect x="1058" y="79.59999999999998" width="2" height="2" fill="#b4b4b4"/><rect x="1062" y="80.59999999999998" width="1.5" height="1.5" fill="#c8c8c8"/><circle cx="1079" cy="69.5" r="12" fill="url(#gs)" stroke="#9c9c9c" stroke-width="0.9"/><circle cx="1079" cy="69.5" r="12" fill="url(#gs2)"/><circle cx="1109" cy="69.5" r="12" fill="url(#gs)" stroke="#9c9c9c" stroke-width="0.9"/><circle cx="1109" cy="69.5" r="12" fill="url(#gs2)"/><circle cx="1139" cy="69.5" r="12" fill="url(#gs)" stroke="#9c9c9c" stroke-width="0.9"/><circle cx="1139" cy="69.5" r="12" fill="url(#gs2)"/><circle cx="1169" cy="69.5" r="12" fill="url(#gs)" stroke="#9c9c9c" stroke-width="0.9"/><circle cx="1169" cy="69.5" r="12" fill="url(#gs2)"/><circle cx="1199" cy="69.5" r="12" fill="url(#gs)" stroke="#9c9c9c" stroke-width="0.9"/><circle cx="1199" cy="69.5" r="12" fill="url(#gs2)"/><circle cx="1229" cy="69.5" r="12" fill="url(#gs)" stroke="#9c9c9c" stroke-width="0.9"/><circle cx="1229" cy="69.5" r="12" fill="url(#gs2)"/><circle cx="1259" cy="69.5" r="12" fill="url(#gs)" stroke="#9c9c9c" stroke-width="0.9"/><circle cx="1259" cy="69.5" r="12" fill="url(#gs2)"/><circle cx="1289" cy="69.5" r="12" fill="url(#gs)" stroke="#9c9c9c" stroke-width="0.9"/><circle cx="1289" cy="69.5" r="12" fill="url(#gs2)"/><circle cx="1319" cy="69.5" r="12" fill="url(#gs)" stroke="#9c9c9c" stroke-width="0.9"/><circle cx="1319" cy="69.5" r="12" fill="url(#gs2)"/><rect x="1070.0" y="67.0" width="5" height="5" fill="#e8dcb0" stroke="#333" stroke-width="0.8"/><rect x="1076.3" y="67.0" width="5" height="5" fill="#e8dcb0" stroke="#333" stroke-width="0.8"/><rect x="1082.6" y="67.0" width="5" height="5" fill="#e8dcb0" stroke="#333" stroke-width="0.8"/><rect x="1101" y="63.5" width="15" height="12" fill="#e8e8e8" stroke="#555" stroke-width="0.9"/><rect x="1111" y="63.5" width="5" height="12" fill="#e8dcb0" stroke="#555" stroke-width="0.9"/><rect x="1133" y="61.5" width="6" height="15" fill="#d8ecf0" stroke="#444" stroke-width="0.9"/><path d="M1141 70.5 h7 M1144.5 67.0 v7" stroke="#333" stroke-width="1.2"/><rect x="1163" y="61.5" width="6" height="15" fill="#d8ecf0" stroke="#444" stroke-width="0.9"/><path d="M1171 70.5 h7" stroke="#333" stroke-width="1.2"/><rect x="1192" y="65.5" width="6" height="11" fill="#d8ecf0" stroke="#444" stroke-width="0.9"/><rect x="1195" y="67.5" width="6" height="11" fill="#d8ecf0" stroke="#444" stroke-width="0.9"/><path d="M1194 63.5 q4 -4 8 0" fill="none" stroke="#333" stroke-width="1"/><path d="M1202 71.5 h6 M1202 74.5 h6" stroke="#333" stroke-width="1.1"/><rect x="1222" y="65.5" width="6" height="11" fill="#d8ecf0" stroke="#444" stroke-width="0.9"/><rect x="1225" y="67.5" width="6" height="11" fill="#d8ecf0" stroke="#444" stroke-width="0.9"/><path d="M1224 63.5 q4 -4 8 0" fill="none" stroke="#333" stroke-width="1"/><path d="M1232 72.5 h6 M1235 69.5 v6" stroke="#333" stroke-width="1.1"/><rect x="1251" y="63.5" width="6" height="1" fill="#444"/><rect x="1251" y="66.5" width="6" height="1" fill="#444"/><rect x="1251" y="69.5" width="6" height="1" fill="#444"/><rect x="1251" y="72.5" width="6" height="1" fill="#444"/><rect x="1251" y="75.5" width="6" height="1" fill="#444"/><path d="M1260 70.5 h5 M1260 70.5 v6 M1260 73.5 h4" stroke="#444" stroke-width="1.1" fill="none"/><path d="M1260 64.5 h6 M1263 61.5 v6" stroke="#444" stroke-width="1.1"/><rect x="1281" y="63.5" width="6" height="1" fill="#444"/><rect x="1281" y="66.5" width="6" height="1" fill="#444"/><rect x="1281" y="69.5" width="6" height="1" fill="#444"/><rect x="1281" y="72.5" width="6" height="1" fill="#444"/><rect x="1281" y="75.5" width="6" height="1" fill="#444"/><path d="M1290 70.5 h5 M1290 70.5 v6 M1290 73.5 h4" stroke="#444" stroke-width="1.1" fill="none"/><path d="M1290 64.5 h6" stroke="#444" stroke-width="1.1"/><rect x="1316" y="67.5" width="12" height="10" fill="#f2d77a" stroke="#6a8a50" stroke-width="1"/><path d="M1316 76.5 l4 -4 l3 2 l5 -5 v8 z" fill="#8ab860"/><path d="M1312 70.5 q0 -7 7 -7" fill="none" stroke="#444" stroke-width="1.3"/><rect x="1405" y="57" width="32" height="16" rx="2" fill="#d0d0d0"/><path d="M1409 61 q5 0 5 5 v4 M1411 67 l3 4 l3 -4" fill="none" stroke="#555" stroke-width="1.6"/><path d="M1421 60 v11" stroke="#555" stroke-width="1"/><path d="M1425 61 l8 9 M1433 61 l-8 9" stroke="#555" stroke-width="1.6"/><rect x="1055.5" y="121.5" width="372" height="313" fill="#c8c8c8" stroke="#8a8a8a" stroke-width="1"/><rect x="1099" y="122" width="94" height="312" fill="#f0f0f0"/><rect x="1193" y="122" width="5" height="312" fill="#a0a0a0"/><rect x="1057" y="123" width="41" height="16" fill="#8ccff2"/><rect x="1057" y="123" width="41" height="7" fill="#b5e0f7"/><rect x="1057" y="138.5" width="41" height="1" fill="#e8f4fa"/><rect x="1099" y="138.5" width="94" height="1.2" fill="#b4b4b4"/><rect x="1098" y="123" width="1" height="16" fill="#f0f0f0"/><rect x="1101" y="124" width="1.5" height="1.5" fill="#888"/><rect x="1105" y="124" width="1.5" height="1.5" fill="#888"/><rect x="1101" y="128" width="1.5" height="1.5" fill="#888"/><rect x="1105" y="128" width="1.5" height="1.5" fill="#888"/><rect x="1101" y="132" width="1.5" height="1.5" fill="#888"/><rect x="1105" y="132" width="1.5" height="1.5" fill="#888"/><rect x="1101" y="136" width="1.5" height="1.5" fill="#888"/><rect x="1105" y="136" width="1.5" height="1.5" fill="#888"/><text x="1062" y="135.6" font-family="Liberation Sans" font-weight="bold" font-size="12" fill="#000" clip-path="url(#xs)">1</text><rect x="1057" y="139" width="41" height="16" fill="#8ccff2"/><rect x="1057" y="139" width="41" height="7" fill="#b5e0f7"/><rect x="1057" y="154.5" width="41" height="1" fill="#e8f4fa"/><rect x="1099" y="154.5" width="94" height="1.2" fill="#b4b4b4"/><rect x="1098" y="139" width="1" height="16" fill="#f0f0f0"/><rect x="1101" y="140" width="1.5" height="1.5" fill="#888"/><rect x="1105" y="140" width="1.5" height="1.5" fill="#888"/><rect x="1101" y="144" width="1.5" height="1.5" fill="#888"/><rect x="1105" y="144" width="1.5" height="1.5" fill="#888"/><rect x="1101" y="148" width="1.5" height="1.5" fill="#888"/><rect x="1105" y="148" width="1.5" height="1.5" fill="#888"/><rect x="1101" y="152" width="1.5" height="1.5" fill="#888"/><rect x="1105" y="152" width="1.5" height="1.5" fill="#888"/><text x="1062" y="151.6" font-family="Liberation Sans" font-weight="bold" font-size="12" fill="#000" clip-path="url(#xs)">2</text><rect x="1057" y="155" width="41" height="16" fill="#8ccff2"/><rect x="1057" y="155" width="41" height="7" fill="#b5e0f7"/><rect x="1057" y="170.5" width="41" height="1" fill="#e8f4fa"/><rect x="1099" y="170.5" width="94" height="1.2" fill="#b4b4b4"/><rect x="1098" y="155" width="1" height="16" fill="#f0f0f0"/><rect x="1101" y="156" width="1.5" height="1.5" fill="#888"/><rect x="1105" y="156" width="1.5" height="1.5" fill="#888"/><rect x="1101" y="160" width="1.5" height="1.5" fill="#888"/><rect x="1105" y="160" width="1.5" height="1.5" fill="#888"/><rect x="1101" y="164" width="1.5" height="1.5" fill="#888"/><rect x="1105" y="164" width="1.5" height="1.5" fill="#888"/><rect x="1101" y="168" width="1.5" height="1.5" fill="#888"/><rect x="1105" y="168" width="1.5" height="1.5" fill="#888"/><text x="1062" y="167.6" font-family="Liberation Sans" font-weight="bold" font-size="12" fill="#000" clip-path="url(#xs)">3</text><rect x="1057" y="171" width="41" height="16" fill="#8ccff2"/><rect x="1057" y="171" width="41" height="7" fill="#b5e0f7"/><rect x="1057" y="186.5" width="41" height="1" fill="#e8f4fa"/><rect x="1099" y="186.5" width="94" height="1.2" fill="#b4b4b4"/><rect x="1098" y="171" width="1" height="16" fill="#f0f0f0"/><rect x="1101" y="172" width="1.5" height="1.5" fill="#888"/><rect x="1105" y="172" width="1.5" height="1.5" fill="#888"/><rect x="1101" y="176" width="1.5" height="1.5" fill="#888"/><rect x="1105" y="176" width="1.5" height="1.5" fill="#888"/><rect x="1101" y="180" width="1.5" height="1.5" fill="#888"/><rect x="1105" y="180" width="1.5" height="1.5" fill="#888"/><rect x="1101" y="184" width="1.5" height="1.5" fill="#888"/><rect x="1105" y="184" width="1.5" height="1.5" fill="#888"/><text x="1062" y="183.6" font-family="Liberation Sans" font-weight="bold" font-size="12" fill="#000" clip-path="url(#xs)">4</text><rect x="1057" y="187" width="41" height="16" fill="#8ccff2"/><rect x="1057" y="187" width="41" height="7" fill="#b5e0f7"/><rect x="1057" y="202.5" width="41" height="1" fill="#e8f4fa"/><rect x="1099" y="202.5" width="94" height="1.2" fill="#b4b4b4"/><rect x="1098" y="187" width="1" height="16" fill="#f0f0f0"/><rect x="1101" y="188" width="1.5" height="1.5" fill="#888"/><rect x="1105" y="188" width="1.5" height="1.5" fill="#888"/><rect x="1101" y="192" width="1.5" height="1.5" fill="#888"/><rect x="1105" y="192" width="1.5" height="1.5" fill="#888"/><rect x="1101" y="196" width="1.5" height="1.5" fill="#888"/><rect x="1105" y="196" width="1.5" height="1.5" fill="#888"/><rect x="1101" y="200" width="1.5" height="1.5" fill="#888"/><rect x="1105" y="200" width="1.5" height="1.5" fill="#888"/><text x="1062" y="199.6" font-family="Liberation Sans" font-weight="bold" font-size="12" fill="#000" clip-path="url(#xs)">5</text><rect x="1057" y="203" width="41" height="16" fill="#8ccff2"/><rect x="1057" y="203" width="41" height="7" fill="#b5e0f7"/><rect x="1057" y="218.5" width="41" height="1" fill="#e8f4fa"/><rect x="1099" y="218.5" width="94" height="1.2" fill="#b4b4b4"/><rect x="1098" y="203" width="1" height="16" fill="#f0f0f0"/><rect x="1101" y="204" width="1.5" height="1.5" fill="#888"/><rect x="1105" y="204" width="1.5" height="1.5" fill="#888"/><rect x="1101" y="208" width="1.5" height="1.5" fill="#888"/><rect x="1105" y="208" width="1.5" height="1.5" fill="#888"/><rect x="1101" y="212" width="1.5" height="1.5" fill="#888"/><rect x="1105" y="212" width="1.5" height="1.5" fill="#888"/><rect x="1101" y="216" width="1.5" height="1.5" fill="#888"/><rect x="1105" y="216" width="1.5" height="1.5" fill="#888"/><text x="1062" y="215.6" font-family="Liberation Sans" font-weight="bold" font-size="12" fill="#000" clip-path="url(#xs)">6</text><rect x="1057" y="219" width="41" height="16" fill="#8ccff2"/><rect x="1057" y="219" width="41" height="7" fill="#b5e0f7"/><rect x="1057" y="234.5" width="41" height="1" fill="#e8f4fa"/><rect x="1099" y="234.5" width="94" height="1.2" fill="#b4b4b4"/><rect x="1098" y="219" width="1" height="16" fill="#f0f0f0"/><rect x="1101" y="220" width="1.5" height="1.5" fill="#888"/><rect x="1105" y="220" width="1.5" height="1.5" fill="#888"/><rect x="1101" y="224" width="1.5" height="1.5" fill="#888"/><rect x="1105" y="224" width="1.5" height="1.5" fill="#888"/><rect x="1101" y="228" width="1.5" height="1.5" fill="#888"/><rect x="1105" y="228" width="1.5" height="1.5" fill="#888"/><rect x="1101" y="232" width="1.5" height="1.5" fill="#888"/><rect x="1105" y="232" width="1.5" height="1.5" fill="#888"/><text x="1062" y="231.6" font-family="Liberation Sans" font-weight="bold" font-size="12" fill="#000" clip-path="url(#xs)">7</text><rect x="1057" y="235" width="41" height="16" fill="#8ccff2"/><rect x="1057" y="235" width="41" height="7" fill="#b5e0f7"/><rect x="1057" y="250.5" width="41" height="1" fill="#e8f4fa"/><rect x="1099" y="250.5" width="94" height="1.2" fill="#b4b4b4"/><rect x="1098" y="235" width="1" height="16" fill="#f0f0f0"/><rect x="1101" y="236" width="1.5" height="1.5" fill="#888"/><rect x="1105" y="236" width="1.5" height="1.5" fill="#888"/><rect x="1101" y="240" width="1.5" height="1.5" fill="#888"/><rect x="1105" y="240" width="1.5" height="1.5" fill="#888"/><rect x="1101" y="244" width="1.5" height="1.5" fill="#888"/><rect x="1105" y="244" width="1.5" height="1.5" fill="#888"/><rect x="1101" y="248" width="1.5" height="1.5" fill="#888"/><rect x="1105" y="248" width="1.5" height="1.5" fill="#888"/><text x="1062" y="247.6" font-family="Liberation Sans" font-weight="bold" font-size="12" fill="#000" clip-path="url(#xs)">8</text><rect x="1057" y="251" width="41" height="16" fill="#8ccff2"/><rect x="1057" y="251" width="41" height="7" fill="#b5e0f7"/><rect x="1057" y="266.5" width="41" height="1" fill="#e8f4fa"/><rect x="1099" y="266.5" width="94" height="1.2" fill="#b4b4b4"/><rect x="1098" y="251" width="1" height="16" fill="#f0f0f0"/><rect x="1101" y="252" width="1.5" height="1.5" fill="#888"/><rect x="1105" y="252" width="1.5" height="1.5" fill="#888"/><rect x="1101" y="256" width="1.5" height="1.5" fill="#888"/><rect x="1105" y="256" width="1.5" height="1.5" fill="#888"/><rect x="1101" y="260" width="1.5" height="1.5" fill="#888"/><rect x="1105" y="260" width="1.5" height="1.5" fill="#888"/><rect x="1101" y="264" width="1.5" height="1.5" fill="#888"/><rect x="1105" y="264" width="1.5" height="1.5" fill="#888"/><text x="1062" y="263.6" font-family="Liberation Sans" font-weight="bold" font-size="12" fill="#000" clip-path="url(#xs)">9</text><rect x="1057" y="267" width="41" height="16" fill="#8ccff2"/><rect x="1057" y="267" width="41" height="7" fill="#b5e0f7"/><rect x="1057" y="282.5" width="41" height="1" fill="#e8f4fa"/><rect x="1099" y="282.5" width="94" height="1.2" fill="#b4b4b4"/><rect x="1098" y="267" width="1" height="16" fill="#f0f0f0"/><rect x="1101" y="268" width="1.5" height="1.5" fill="#888"/><rect x="1105" y="268" width="1.5" height="1.5" fill="#888"/><rect x="1101" y="272" width="1.5" height="1.5" fill="#888"/><rect x="1105" y="272" width="1.5" height="1.5" fill="#888"/><rect x="1101" y="276" width="1.5" height="1.5" fill="#888"/><rect x="1105" y="276" width="1.5" height="1.5" fill="#888"/><rect x="1101" y="280" width="1.5" height="1.5" fill="#888"/><rect x="1105" y="280" width="1.5" height="1.5" fill="#888"/><text x="1062" y="279.6" font-family="Liberation Sans" font-weight="bold" font-size="12" fill="#000" clip-path="url(#xs)">10</text><rect x="1057" y="283" width="41" height="16" fill="#8ccff2"/><rect x="1057" y="283" width="41" height="7" fill="#b5e0f7"/><rect x="1057" y="298.5" width="41" height="1" fill="#e8f4fa"/><rect x="1099" y="298.5" width="94" height="1.2" fill="#b4b4b4"/><rect x="1098" y="283" width="1" height="16" fill="#f0f0f0"/><rect x="1101" y="284" width="1.5" height="1.5" fill="#888"/><rect x="1105" y="284" width="1.5" height="1.5" fill="#888"/><rect x="1101" y="288" width="1.5" height="1.5" fill="#888"/><rect x="1105" y="288" width="1.5" height="1.5" fill="#888"/><rect x="1101" y="292" width="1.5" height="1.5" fill="#888"/><rect x="1105" y="292" width="1.5" height="1.5" fill="#888"/><rect x="1101" y="296" width="1.5" height="1.5" fill="#888"/><rect x="1105" y="296" width="1.5" height="1.5" fill="#888"/><text x="1062" y="295.6" font-family="Liberation Sans" font-weight="bold" font-size="12" fill="#000" clip-path="url(#xs)">11</text><rect x="1057" y="299" width="41" height="16" fill="#8ccff2"/><rect x="1057" y="299" width="41" height="7" fill="#b5e0f7"/><rect x="1057" y="314.5" width="41" height="1" fill="#e8f4fa"/><rect x="1099" y="314.5" width="94" height="1.2" fill="#b4b4b4"/><rect x="1098" y="299" width="1" height="16" fill="#f0f0f0"/><rect x="1101" y="300" width="1.5" height="1.5" fill="#888"/><rect x="1105" y="300" width="1.5" height="1.5" fill="#888"/><rect x="1101" y="304" width="1.5" height="1.5" fill="#888"/><rect x="1105" y="304" width="1.5" height="1.5" fill="#888"/><rect x="1101" y="308" width="1.5" height="1.5" fill="#888"/><rect x="1105" y="308" width="1.5" height="1.5" fill="#888"/><rect x="1101" y="312" width="1.5" height="1.5" fill="#888"/><rect x="1105" y="312" width="1.5" height="1.5" fill="#888"/><text x="1062" y="311.6" font-family="Liberation Sans" font-weight="bold" font-size="12" fill="#000" clip-path="url(#xs)">12</text><rect x="1057" y="315" width="41" height="16" fill="#8ccff2"/><rect x="1057" y="315" width="41" height="7" fill="#b5e0f7"/><rect x="1057" y="330.5" width="41" height="1" fill="#e8f4fa"/><rect x="1099" y="330.5" width="94" height="1.2" fill="#b4b4b4"/><rect x="1098" y="315" width="1" height="16" fill="#f0f0f0"/><rect x="1101" y="316" width="1.5" height="1.5" fill="#888"/><rect x="1105" y="316" width="1.5" height="1.5" fill="#888"/><rect x="1101" y="320" width="1.5" height="1.5" fill="#888"/><rect x="1105" y="320" width="1.5" height="1.5" fill="#888"/><rect x="1101" y="324" width="1.5" height="1.5" fill="#888"/><rect x="1105" y="324" width="1.5" height="1.5" fill="#888"/><rect x="1101" y="328" width="1.5" height="1.5" fill="#888"/><rect x="1105" y="328" width="1.5" height="1.5" fill="#888"/><text x="1062" y="327.6" font-family="Liberation Sans" font-weight="bold" font-size="12" fill="#000" clip-path="url(#xs)">13</text><rect x="1057" y="331" width="41" height="16" fill="#8ccff2"/><rect x="1057" y="331" width="41" height="7" fill="#b5e0f7"/><rect x="1057" y="346.5" width="41" height="1" fill="#e8f4fa"/><rect x="1099" y="346.5" width="94" height="1.2" fill="#b4b4b4"/><rect x="1098" y="331" width="1" height="16" fill="#f0f0f0"/><rect x="1101" y="332" width="1.5" height="1.5" fill="#888"/><rect x="1105" y="332" width="1.5" height="1.5" fill="#888"/><rect x="1101" y="336" width="1.5" height="1.5" fill="#888"/><rect x="1105" y="336" width="1.5" height="1.5" fill="#888"/><rect x="1101" y="340" width="1.5" height="1.5" fill="#888"/><rect x="1105" y="340" width="1.5" height="1.5" fill="#888"/><rect x="1101" y="344" width="1.5" height="1.5" fill="#888"/><rect x="1105" y="344" width="1.5" height="1.5" fill="#888"/><text x="1062" y="343.6" font-family="Liberation Sans" font-weight="bold" font-size="12" fill="#000" clip-path="url(#xs)">14</text><rect x="1057" y="347" width="41" height="16" fill="#8ccff2"/><rect x="1057" y="347" width="41" height="7" fill="#b5e0f7"/><rect x="1057" y="362.5" width="41" height="1" fill="#e8f4fa"/><rect x="1099" y="362.5" width="94" height="1.2" fill="#b4b4b4"/><rect x="1098" y="347" width="1" height="16" fill="#f0f0f0"/><rect x="1101" y="348" width="1.5" height="1.5" fill="#888"/><rect x="1105" y="348" width="1.5" height="1.5" fill="#888"/><rect x="1101" y="352" width="1.5" height="1.5" fill="#888"/><rect x="1105" y="352" width="1.5" height="1.5" fill="#888"/><rect x="1101" y="356" width="1.5" height="1.5" fill="#888"/><rect x="1105" y="356" width="1.5" height="1.5" fill="#888"/><rect x="1101" y="360" width="1.5" height="1.5" fill="#888"/><rect x="1105" y="360" width="1.5" height="1.5" fill="#888"/><text x="1062" y="359.6" font-family="Liberation Sans" font-weight="bold" font-size="12" fill="#000" clip-path="url(#xs)">15</text><rect x="1057" y="363" width="41" height="16" fill="#8ccff2"/><rect x="1057" y="363" width="41" height="7" fill="#b5e0f7"/><rect x="1057" y="378.5" width="41" height="1" fill="#e8f4fa"/><rect x="1099" y="378.5" width="94" height="1.2" fill="#b4b4b4"/><rect x="1098" y="363" width="1" height="16" fill="#f0f0f0"/><rect x="1101" y="364" width="1.5" height="1.5" fill="#888"/><rect x="1105" y="364" width="1.5" height="1.5" fill="#888"/><rect x="1101" y="368" width="1.5" height="1.5" fill="#888"/><rect x="1105" y="368" width="1.5" height="1.5" fill="#888"/><rect x="1101" y="372" width="1.5" height="1.5" fill="#888"/><rect x="1105" y="372" width="1.5" height="1.5" fill="#888"/><rect x="1101" y="376" width="1.5" height="1.5" fill="#888"/><rect x="1105" y="376" width="1.5" height="1.5" fill="#888"/><text x="1062" y="375.6" font-family="Liberation Sans" font-weight="bold" font-size="12" fill="#000" clip-path="url(#xs)">16</text><rect x="1057" y="379" width="41" height="16" fill="#8ccff2"/><rect x="1057" y="379" width="41" height="7" fill="#b5e0f7"/><rect x="1057" y="394.5" width="41" height="1" fill="#e8f4fa"/><rect x="1099" y="394.5" width="94" height="1.2" fill="#b4b4b4"/><rect x="1098" y="379" width="1" height="16" fill="#f0f0f0"/><rect x="1101" y="380" width="1.5" height="1.5" fill="#888"/><rect x="1105" y="380" width="1.5" height="1.5" fill="#888"/><rect x="1101" y="384" width="1.5" height="1.5" fill="#888"/><rect x="1105" y="384" width="1.5" height="1.5" fill="#888"/><rect x="1101" y="388" width="1.5" height="1.5" fill="#888"/><rect x="1105" y="388" width="1.5" height="1.5" fill="#888"/><rect x="1101" y="392" width="1.5" height="1.5" fill="#888"/><rect x="1105" y="392" width="1.5" height="1.5" fill="#888"/><text x="1062" y="391.6" font-family="Liberation Sans" font-weight="bold" font-size="12" fill="#000" clip-path="url(#xs)">17</text><rect x="1057" y="395" width="41" height="16" fill="#8ccff2"/><rect x="1057" y="395" width="41" height="7" fill="#b5e0f7"/><rect x="1057" y="410.5" width="41" height="1" fill="#e8f4fa"/><rect x="1099" y="410.5" width="94" height="1.2" fill="#b4b4b4"/><rect x="1098" y="395" width="1" height="16" fill="#f0f0f0"/><rect x="1101" y="396" width="1.5" height="1.5" fill="#888"/><rect x="1105" y="396" width="1.5" height="1.5" fill="#888"/><rect x="1101" y="400" width="1.5" height="1.5" fill="#888"/><rect x="1105" y="400" width="1.5" height="1.5" fill="#888"/><rect x="1101" y="404" width="1.5" height="1.5" fill="#888"/><rect x="1105" y="404" width="1.5" height="1.5" fill="#888"/><rect x="1101" y="408" width="1.5" height="1.5" fill="#888"/><rect x="1105" y="408" width="1.5" height="1.5" fill="#888"/><text x="1062" y="407.6" font-family="Liberation Sans" font-weight="bold" font-size="12" fill="#000" clip-path="url(#xs)">18</text><rect x="1057" y="411" width="41" height="16" fill="#8ccff2"/><rect x="1057" y="411" width="41" height="7" fill="#b5e0f7"/><rect x="1057" y="426.5" width="41" height="1" fill="#e8f4fa"/><rect x="1099" y="426.5" width="94" height="1.2" fill="#b4b4b4"/><rect x="1098" y="411" width="1" height="16" fill="#f0f0f0"/><rect x="1101" y="412" width="1.5" height="1.5" fill="#888"/><rect x="1105" y="412" width="1.5" height="1.5" fill="#888"/><rect x="1101" y="416" width="1.5" height="1.5" fill="#888"/><rect x="1105" y="416" width="1.5" height="1.5" fill="#888"/><rect x="1101" y="420" width="1.5" height="1.5" fill="#888"/><rect x="1105" y="420" width="1.5" height="1.5" fill="#888"/><rect x="1101" y="424" width="1.5" height="1.5" fill="#888"/><rect x="1105" y="424" width="1.5" height="1.5" fill="#888"/><text x="1062" y="423.6" font-family="Liberation Sans" font-weight="bold" font-size="12" fill="#000" clip-path="url(#xs)">19</text><rect x="1057" y="427" width="41" height="7" fill="#8ccff2"/><rect x="1057" y="427" width="41" height="7" fill="#b5e0f7"/><rect x="1098" y="427" width="1" height="7" fill="#f0f0f0"/><rect x="1101" y="428" width="1.5" height="1.5" fill="#888"/><rect x="1105" y="428" width="1.5" height="1.5" fill="#888"/><rect x="1101" y="432" width="1.5" height="1.5" fill="#888"/><rect x="1105" y="432" width="1.5" height="1.5" fill="#888"/><text x="1062" y="439.6" font-family="Liberation Sans" font-weight="bold" font-size="12" fill="#000" clip-path="url(#xs)">20</text><rect x="1055" y="434" width="373" height="1" fill="#8a8a8a"/><rect x="1099" y="123" width="93" height="15" fill="#4a0404"/><rect x="1101" y="125.0" width="1.5" height="1.5" fill="#ddd"/><rect x="1105" y="125.0" width="1.5" height="1.5" fill="#ddd"/><rect x="1101" y="128.5" width="1.5" height="1.5" fill="#ddd"/><rect x="1105" y="128.5" width="1.5" height="1.5" fill="#ddd"/><rect x="1101" y="132.0" width="1.5" height="1.5" fill="#ddd"/><rect x="1105" y="132.0" width="1.5" height="1.5" fill="#ddd"/><rect x="1101" y="135.5" width="1.5" height="1.5" fill="#ddd"/><rect x="1105" y="135.5" width="1.5" height="1.5" fill="#ddd"/><path d="M1112 137 l3 -8 q1 -2 3 -1 q1 1 0 3 l-4 7" fill="none" stroke="#ff2020" stroke-width="1.2"/><rect x="1411" y="123" width="16" height="310" fill="#ececec"/><path d="M1415 134 l4 -4 l4 4 z" fill="#333"/><path d="M1415 423 l4 4 l4 -4 z" fill="#333"/><rect x="1412.5" y="141.5" width="13" height="86" rx="2" fill="url(#gscrv)" stroke="#9a9a9a" stroke-width="1"/><path d="M1416 181 h6 M1416 183 h6 M1416 185 h6" stroke="#555" stroke-width="0.8"/><rect x="1429" y="250" width="7" height="22" fill="#c8c8c8"/><path d="M1434 258 v6 l-3 -3 z" fill="#333"/><rect x="1045" y="420" width="8" height="24" fill="#c4c4c4"/><path d="M1051 429 v6 l-3 -3 z" fill="#666"/><rect x="1045" y="446" width="8" height="23" fill="#c4c4c4"/><path d="M1048 455 v6 l3 -3 z" fill="#666"/><rect x="1286" y="437" width="1" height="22" fill="#c8c8c8"/><rect x="1355" y="439" width="12" height="18" fill="#f4f4f4"/><path d="M1357 446 l3.5 -4 l3.5 4 z" fill="#5a7ac8"/><path d="M1357 450 l3.5 4 l3.5 -4 z" fill="#b8c0d0"/><rect x="1222" y="460" width="23" height="8" fill="#c4c4c4"/><path d="M1230 466 l3 -3 l3 3 z" fill="#333"/><rect x="1248" y="460" width="23" height="8" fill="#c4c4c4"/><path d="M1256 463 l3 3 l3 -3 z" fill="#333"/><rect x="1057" y="471" width="30" height="16" rx="3" fill="#c8c8c8"/><path d="M1062 475 h8 v8 h-8 z" fill="none" stroke="#333" stroke-width="1.2"/><path d="M1065 478 h8 v7 h-8 z" fill="#d8d8d8" stroke="#333" stroke-width="1"/><path d="M1075 474 l8 5 l-8 5 z" fill="#333"/><rect x="1405" y="471" width="32" height="16" rx="2" fill="#d0d0d0"/><path d="M1409 475 q5 0 5 5 v4 M1411 481 l3 4 l3 -4" fill="none" stroke="#555" stroke-width="1.6"/><path d="M1421 474 v11" stroke="#555" stroke-width="1"/><path d="M1425 475 l8 9 M1433 475 l-8 9" stroke="#555" stroke-width="1.6"/><circle cx="1074.5" cy="511" r="9" fill="url(#gs)" stroke="#9c9c9c" stroke-width="0.9"/><circle cx="1074.5" cy="511" r="9" fill="url(#gs2)"/><path d="M1069 511 h11 M1074.5 505.5 v11" stroke="#444" stroke-width="1.5"/><circle cx="1099.5" cy="511" r="9" fill="url(#gs)" stroke="#9c9c9c" stroke-width="0.9"/><circle cx="1099.5" cy="511" r="9" fill="url(#gs2)"/><path d="M1094 511 h11" stroke="#444" stroke-width="1.5"/><circle cx="1124.5" cy="511" r="9" fill="url(#gs)" stroke="#9c9c9c" stroke-width="0.9"/><circle cx="1124.5" cy="511" r="9" fill="url(#gs2)"/><path d="M1119 512 h8 M1123 508 v8 M1124 507 h6 M1127 507 v6" stroke="#444" stroke-width="1.2"/><circle cx="1233" cy="511" r="9" fill="url(#gs)" stroke="#9c9c9c" stroke-width="0.9"/><circle cx="1233" cy="511" r="9" fill="url(#gs2)"/><path d="M1227 516 l10 -10" stroke="#2a7ab0" stroke-width="2.5"/><path d="M1226 517 l3 -2" stroke="#333" stroke-width="2"/><circle cx="1281" cy="511" r="9" fill="url(#gs)" stroke="#9c9c9c" stroke-width="0.9"/><circle cx="1281" cy="511" r="9" fill="url(#gs2)"/><path d="M1276 516 l2 -4 l7 -7 l2 2 l-7 7 z" fill="#f0a030" stroke="#555" stroke-width="0.6"/><circle cx="1329.5" cy="511" r="9" fill="url(#gs)" stroke="#9c9c9c" stroke-width="0.9"/><circle cx="1329.5" cy="511" r="9" fill="url(#gs2)"/><path d="M1325 507 h9 v8 q-4.5 2 -9 0 z" fill="#ddd" stroke="#555" stroke-width="0.8"/><path d="M1325 507 h9 v4 h-9 z" fill="#c83020"/><rect x="1244.5" y="501.5" width="19" height="19" rx="2" fill="#a8d0f0" stroke="#3a8ac8" stroke-width="1"/><rect x="1248" y="505" width="12" height="12" rx="1" fill="#1f3a5b"/><rect x="1292.0" y="501.5" width="19" height="19" rx="2" fill="#a8d0f0" stroke="#3a8ac8" stroke-width="1"/><rect x="1295.5" y="505" width="12" height="12" rx="1" fill="#1f3a5b"/><rect x="1340.5" y="501.5" width="19" height="19" rx="2" fill="#a8d0f0" stroke="#3a8ac8" stroke-width="1"/><rect x="1344" y="505" width="12" height="12" rx="1" fill="#1f3a5b"/><circle cx="1392" cy="511" r="9" fill="url(#gs)" stroke="#9c9c9c" stroke-width="0.9"/><circle cx="1392" cy="511" r="9" fill="url(#gs2)"/><path d="M1388 509 a3 3 0 0 1 5 -2 M1396 513 a3 3 0 0 1 -5 2" fill="none" stroke="#444" stroke-width="1.3"/><circle cx="1416.5" cy="511" r="9" fill="url(#gs)" stroke="#9c9c9c" stroke-width="0.9"/><circle cx="1416.5" cy="511" r="9" fill="url(#gs2)"/><path d="M1409 511 h15 M1416.5 503 v16" stroke="#444" stroke-width="1.3"/><path d="M1413 506 l3.5 -3 l3.5 3 M1413 516 l3.5 3 l3.5 -3" fill="none" stroke="#444" stroke-width="1.3"/><rect x="1063" y="647" width="360" height="19" fill="#eeeeee"/><rect x="1066" y="531" width="42" height="12" fill="#efe7dc" stroke="#000" stroke-width="2"/><rect x="1066" y="551" width="42" height="12" fill="#cd710d" stroke="#000" stroke-width="2"/><rect x="1066" y="571" width="42" height="12" fill="#daa294" stroke="#000" stroke-width="2"/><rect x="1066" y="591" width="42" height="12" fill="#ffffff" stroke="#000" stroke-width="2"/><rect x="1066" y="611" width="42" height="12" fill="#151515" stroke="#000" stroke-width="2"/><rect x="1066" y="631" width="42" height="12" fill="#b5484a" stroke="#000" stroke-width="2"/><rect x="1066" y="651" width="42" height="12" fill="#1f3a5b" stroke="#000" stroke-width="2"/><rect x="1066" y="671" width="42" height="12" fill="#4e75a0" stroke="#000" stroke-width="2"/><circle cx="1128" cy="657" r="3" fill="#000"/></svg><div class="a" style="left:500px;top:31px;font-size:13px;color:#333;font-weight:normal;white-space:nowrap;line-height:1;">S</div><div class="a" style="left:580px;top:33.3px;font-size:9px;color:#000;font-weight:normal;white-space:nowrap;line-height:1;">Frame</div><div class="a" style="left:616px;top:34.6px;font-size:9px;color:#000;font-weight:normal;white-space:nowrap;line-height:1;">1</div><div class="a" style="left:680.5px;top:33.3px;font-size:9.3px;color:#000;font-weight:normal;white-space:nowrap;line-height:1;">Start</div><div class="a" style="left:712px;top:34.6px;font-size:9px;color:#000;font-weight:normal;white-space:nowrap;line-height:1;">1</div><div class="a" style="left:762px;top:33.3px;font-size:9.3px;color:#000;font-weight:normal;white-space:nowrap;line-height:1;">Stop</div><div class="a" style="left:793px;top:34.6px;font-size:9px;color:#000;font-weight:normal;white-space:nowrap;line-height:1;">60</div><div class="a" style="left:842px;top:33.3px;font-size:9.3px;color:#000;font-weight:normal;white-space:nowrap;line-height:1;">FPS</div><div class="a" style="left:870px;top:34.6px;font-size:9px;color:#000;font-weight:normal;white-space:nowrap;line-height:1;">24</div><div class="a" style="left:1283px;top:34px;font-size:9.6px;color:#000;font-weight:normal;white-space:nowrap;line-height:1;">Hand-Drawn Animation</div><div class="a" style="left:8.3px;top:184.6px;font-size:22.5px;color:#1a1a1a;font-weight:normal;white-space:nowrap;line-height:1;font-family:'Liberation Serif',serif;">T</div><div class="a" style="left:51.5px;top:59.6px;font-size:10.6px;color:#000a30;font-weight:bold;white-space:nowrap;line-height:1;">Top</div><div class="a" style="left:150px;top:68px;font-size:13px;color:#333;font-weight:normal;white-space:nowrap;line-height:1;">KF</div><div class="a" style="left:905.5px;top:59.2px;font-size:9px;color:#000;font-weight:normal;white-space:nowrap;line-height:1;">Camera</div><div class="a" style="left:960.5px;top:60.1px;font-size:8.8px;color:#000;font-weight:normal;white-space:nowrap;line-height:1;">Drawing</div><div class="a" style="left:148px;top:703.2px;font-size:9px;color:#000;font-weight:normal;white-space:nowrap;line-height:1;">49 %</div><div class="a" style="left:455.7px;top:703.3px;font-size:8.8px;color:#000;font-weight:normal;white-space:nowrap;line-height:1;">Drawing_1-1</div><div class="a" style="left:707px;top:703.3px;font-size:9px;color:#000;font-weight:normal;white-space:nowrap;line-height:1;">Paint</div><div class="a" style="left:960.7px;top:703.3px;font-size:9px;color:#000;font-weight:normal;white-space:nowrap;line-height:1;">Fr 1</div><div class="a" style="left:959px;top:734.5px;font-size:9.1px;color:#000;font-weight:normal;white-space:nowrap;line-height:1;">Timeline</div><div class="a" style="left:117.6px;top:783.2px;font-size:9.1px;color:#fff;font-weight:normal;white-space:nowrap;line-height:1;">Drawing_1</div><div class="a" style="left:117.6px;top:802.3px;font-size:9.1px;color:#000;font-weight:normal;white-space:nowrap;line-height:1;">Drawing</div><div class="a" style="left:369.0px;top:759.4px;width:30px;text-align:center;font-size:9px;color:#9a9a9a;line-height:1">10</div><div class="a" style="left:449.0px;top:759.4px;width:30px;text-align:center;font-size:9px;color:#9a9a9a;line-height:1">20</div><div class="a" style="left:529.0px;top:759.4px;width:30px;text-align:center;font-size:9px;color:#9a9a9a;line-height:1">30</div><div class="a" style="left:609.0px;top:759.4px;width:30px;text-align:center;font-size:9px;color:#9a9a9a;line-height:1">40</div><div class="a" style="left:689.0px;top:759.4px;width:30px;text-align:center;font-size:9px;color:#9a9a9a;line-height:1">50</div><div class="a" style="left:769.0px;top:759.4px;width:30px;text-align:center;font-size:9px;color:#9a9a9a;line-height:1">60</div><div class="a" style="left:849.0px;top:759.4px;width:30px;text-align:center;font-size:9px;color:#9a9a9a;line-height:1">70</div><div class="a" style="left:929.0px;top:759.4px;width:30px;text-align:center;font-size:9px;color:#9a9a9a;line-height:1">80</div><div class="a" style="left:1016px;top:759.4px;font-size:9px;color:#9a9a9a;line-height:1">9</div><div class="a" style="left:1335px;top:62px;font-size:16px;color:#000;font-weight:bold;white-space:nowrap;line-height:1;">&raquo;</div><div class="a" style="left:1360px;top:59.2px;font-size:9px;color:#000;font-weight:normal;white-space:nowrap;line-height:1;">Xsheet</div><div class="a" style="left:1104.2px;top:90.3px;font-size:10.5px;color:#000;font-weight:normal;white-space:nowrap;line-height:1;">Drawing_1</div><div class="a" style="left:1147px;top:126.3px;font-size:11px;color:#fff;font-weight:normal;white-space:nowrap;line-height:1;">1</div><div class="a" style="left:1089.4px;top:442px;font-size:11.4px;color:#000;font-weight:normal;white-space:nowrap;line-height:1;">Current: 1 : Drawing_1</div><div class="a" style="left:1290px;top:442px;font-size:10.6px;color:#000;font-weight:normal;white-space:nowrap;line-height:1;">Exp</div><div class="a" style="left:1316px;top:443px;font-size:11px;color:#000;font-weight:normal;white-space:nowrap;line-height:1;">1</div><div class="a" style="left:1379px;top:442.5px;font-size:12px;color:#000;font-weight:normal;white-space:nowrap;line-height:1;">Overwrite</div><div class="a" style="left:1226.2px;top:474px;font-size:9px;color:#000;font-weight:normal;white-space:nowrap;line-height:1;">Colour</div><div class="a" style="left:1275px;top:475px;font-size:9px;color:#000;font-weight:normal;white-space:nowrap;line-height:1;">Library</div><div class="a" style="left:1326px;top:475px;font-size:9px;color:#000;font-weight:normal;white-space:nowrap;line-height:1;">Tool Properties</div><div class="a" style="left:1137px;top:531.2px;font-size:10.5px;color:#000;font-weight:normal;white-space:nowrap;line-height:1;">Muzzle</div><div class="a" style="left:1137px;top:551.2px;font-size:10.5px;color:#000;font-weight:normal;white-space:nowrap;line-height:1;">Body</div><div class="a" style="left:1137px;top:571.2px;font-size:10.5px;color:#000;font-weight:normal;white-space:nowrap;line-height:1;">Ears</div><div class="a" style="left:1137px;top:591.2px;font-size:10.5px;color:#000;font-weight:normal;white-space:nowrap;line-height:1;">Ears</div><div class="a" style="left:1137px;top:611.2px;font-size:10.5px;color:#000;font-weight:normal;white-space:nowrap;line-height:1;">Nose</div><div class="a" style="left:1137px;top:631.2px;font-size:10.5px;color:#000;font-weight:normal;white-space:nowrap;line-height:1;">Tongue</div><div class="a" style="left:1137px;top:651.2px;font-size:10.5px;color:#000;font-weight:normal;white-space:nowrap;line-height:1;">Pants</div><div class="a" style="left:1137px;top:671.2px;font-size:10.5px;color:#000;font-weight:normal;white-space:nowrap;line-height:1;">Waistband</div></body></html>
